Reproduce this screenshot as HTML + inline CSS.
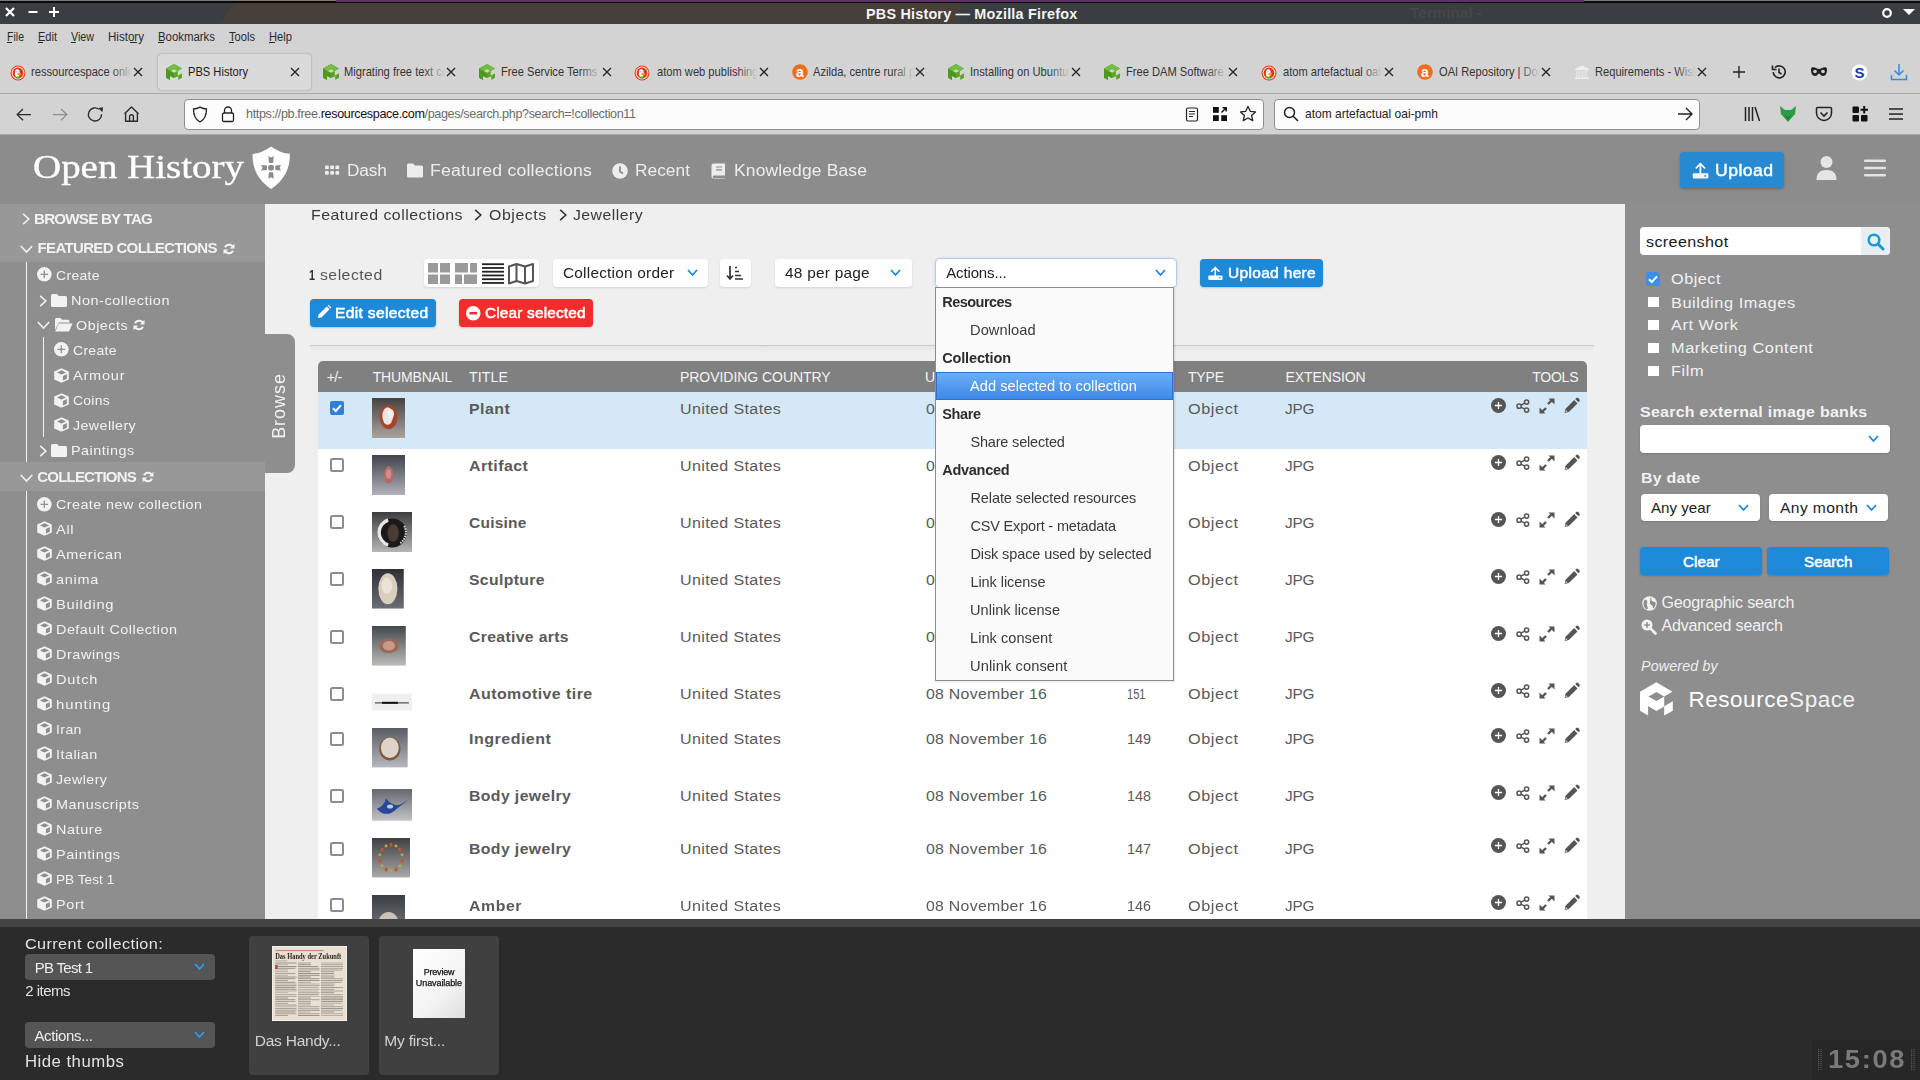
<!DOCTYPE html>
<html><head><meta charset="utf-8">
<style>
*{margin:0;padding:0;box-sizing:border-box}
html,body{width:1920px;height:1080px;overflow:hidden;background:#efefef;font-family:"Liberation Sans",sans-serif}
.a{position:absolute}
.t{position:absolute;white-space:nowrap;line-height:1}
svg{position:absolute;overflow:visible}
</style></head><body>
<div class="a" style="left:0px;top:0px;width:1920px;height:24px;background:#3b3e40;"></div>
<div class="a" style="left:0;top:0;width:1920px;height:24px;background:#463f3a;clip-path:polygon(237px 2px,960px 2px,960px 24px,218px 24px)"></div>
<div class="a" style="left:0px;top:0px;width:1920px;height:1px;background:#797a7c;"></div>
<div class="a" style="left:237px;top:0px;width:99px;height:1px;background:#857a74;"></div>
<div class="a" style="left:0px;top:1px;width:1920px;height:1.5px;background:#0a0a0a;"></div>
<div class="a" style="left:336px;top:0px;width:1248px;height:2.2px;background:#5a3563;"></div>
<div class="t" style="left:866.0px;top:6.9px;font-size:14px;color:#f4f4f4;font-family:'Liberation Sans',sans-serif;font-weight:bold;font-style:normal;letter-spacing:0.200px;transform:scaleX(1.0273);transform-origin:0 0;">PBS History — Mozilla Firefox</div>
<div class="t" style="left:1410.0px;top:5.8px;font-size:14.5px;color:#44484a;font-family:'Liberation Sans',sans-serif;font-weight:bold;font-style:normal;letter-spacing:0.213px;transform:scaleX(1.0274);transform-origin:0 0;">Terminal -</div>
<svg style="left:4px;top:6px;" width="12" height="12" viewBox="0 0 12 12"><path d="M2 2L10 10M10 2L2 10" stroke="#fff" stroke-width="2.2"/></svg>
<svg style="left:27px;top:6px;" width="12" height="12" viewBox="0 0 12 12"><path d="M1.5 6H10.5" stroke="#fff" stroke-width="2"/></svg>
<svg style="left:48px;top:6px;" width="12" height="12" viewBox="0 0 12 12"><path d="M1 6H11M6 1V11" stroke="#fff" stroke-width="2"/></svg>
<svg style="left:1879px;top:5px;" width="16" height="16" viewBox="0 0 16 16"><circle cx="8" cy="8" r="3.8" fill="none" stroke="#fff" stroke-width="2.2"/></svg>
<svg style="left:1902px;top:8px;" width="14" height="10" viewBox="0 0 14 10"><path d="M1 1H13L7 7Z" fill="#fff"/></svg>
<div class="a" style="left:0px;top:24px;width:1920px;height:69px;background:#d3d3d3;"></div>
<div class="t" style="left:7.0px;top:30.8px;font-size:12.5px;color:#2a2a2a;font-family:'Liberation Sans',sans-serif;font-weight:normal;font-style:normal;transform:scaleX(0.8440);transform-origin:0 0;">File</div>
<div class="t" style="left:38.0px;top:30.8px;font-size:12.5px;color:#2a2a2a;font-family:'Liberation Sans',sans-serif;font-weight:normal;font-style:normal;transform:scaleX(0.8821);transform-origin:0 0;">Edit</div>
<div class="t" style="left:71.0px;top:30.8px;font-size:12.5px;color:#2a2a2a;font-family:'Liberation Sans',sans-serif;font-weight:normal;font-style:normal;transform:scaleX(0.8560);transform-origin:0 0;">View</div>
<div class="t" style="left:108.0px;top:30.8px;font-size:12.5px;color:#2a2a2a;font-family:'Liberation Sans',sans-serif;font-weight:normal;font-style:normal;transform:scaleX(0.9256);transform-origin:0 0;">History</div>
<div class="t" style="left:158.0px;top:30.8px;font-size:12.5px;color:#2a2a2a;font-family:'Liberation Sans',sans-serif;font-weight:normal;font-style:normal;transform:scaleX(0.9117);transform-origin:0 0;">Bookmarks</div>
<div class="t" style="left:229.0px;top:30.8px;font-size:12.5px;color:#2a2a2a;font-family:'Liberation Sans',sans-serif;font-weight:normal;font-style:normal;transform:scaleX(0.8910);transform-origin:0 0;">Tools</div>
<div class="t" style="left:269.0px;top:30.8px;font-size:12.5px;color:#2a2a2a;font-family:'Liberation Sans',sans-serif;font-weight:normal;font-style:normal;transform:scaleX(0.8946);transform-origin:0 0;">Help</div>
<div class="a" style="left:7px;top:42px;width:5px;height:1px;background:#2a2a2a;"></div>
<div class="a" style="left:38px;top:42px;width:5px;height:1px;background:#2a2a2a;"></div>
<div class="a" style="left:71px;top:42px;width:5px;height:1px;background:#2a2a2a;"></div>
<div class="a" style="left:130px;top:42px;width:7px;height:1px;background:#2a2a2a;"></div>
<div class="a" style="left:158px;top:42px;width:6px;height:1px;background:#2a2a2a;"></div>
<div class="a" style="left:229px;top:42px;width:5px;height:1px;background:#2a2a2a;"></div>
<div class="a" style="left:269px;top:42px;width:6px;height:1px;background:#2a2a2a;"></div>
<div class="a" style="left:158px;top:54px;width:153px;height:36px;background:#dadada;border-radius:4px;box-shadow:0 0 2px rgba(0,0,0,.35)"></div>
<svg style="left:9.5px;top:64.5px;" width="16" height="16" viewBox="0 0 16 16"><circle cx="8" cy="8" r="7.5" fill="#e2401f"/><circle cx="8" cy="8" r="6.4" fill="#fde8e0"/><circle cx="8" cy="8" r="5.4" fill="#dd3a12"/><ellipse cx="7.3" cy="8.3" rx="2.4" ry="4" fill="#fff"/><circle cx="6.8" cy="6.7" r="0.8" fill="#9ab8e8"/><ellipse cx="9.2" cy="9" rx="1.9" ry="1.2" fill="#f59a1a"/><rect x="6.3" y="11.6" width="3.6" height="1.8" fill="#2cb83a"/></svg>
<div class="a" style="left:31px;top:62px;width:100px;height:20px;overflow:hidden"><div class="t" style="left:0;top:3.6px;font-size:12.8px;color:#333;transform:scaleX(0.87);transform-origin:0 0">ressourcespace online</div></div>
<div class="a" style="left:111px;top:62px;width:21px;height:20px;background:linear-gradient(90deg,rgba(211,211,211,0),#d3d3d3)"></div>
<svg style="left:133px;top:67px;" width="10" height="10" viewBox="0 0 10 10"><path d="M1 1L9 9M9 1L1 9" stroke="#222" stroke-width="1.3"/></svg>
<svg style="left:165.5px;top:64px;" width="16" height="16" viewBox="0 0 16 16"><path d="M8 0L16 4.5L11.8 7V11.8L16 9.3V13.8L12.2 16V12.2L8 14L4 12V16L0 13.8V4.5Z" fill="#5aa526"/><path d="M8 0L16 4.5L8 9.2L0 4.5Z" fill="#74bd42"/><path d="M0 4.5L8 9.2V14L4 12V16L0 13.8Z" fill="#4f9820"/><path d="M8 5.2L10.8 6.9L8 8.6L5.2 6.9Z" fill="#d3d3d3"/></svg>
<div class="a" style="left:188px;top:62px;width:90px;height:20px;overflow:hidden"><div class="t" style="left:0;top:3.6px;font-size:12.8px;color:#1d1d1d;transform:scaleX(0.87);transform-origin:0 0">PBS History</div></div>
<svg style="left:290px;top:67px;" width="10" height="10" viewBox="0 0 10 10"><path d="M1 1L9 9M9 1L1 9" stroke="#222" stroke-width="1.3"/></svg>
<svg style="left:323px;top:64px;" width="16" height="16" viewBox="0 0 16 16"><path d="M8 0L16 4.5L11.8 7V11.8L16 9.3V13.8L12.2 16V12.2L8 14L4 12V16L0 13.8V4.5Z" fill="#5aa526"/><path d="M8 0L16 4.5L8 9.2L0 4.5Z" fill="#74bd42"/><path d="M0 4.5L8 9.2V14L4 12V16L0 13.8Z" fill="#4f9820"/><path d="M8 5.2L10.8 6.9L8 8.6L5.2 6.9Z" fill="#d3d3d3"/></svg>
<div class="a" style="left:344.25px;top:62px;width:99.75px;height:20px;overflow:hidden"><div class="t" style="left:0;top:3.6px;font-size:12.8px;color:#333;transform:scaleX(0.87);transform-origin:0 0">Migrating free text collection</div></div>
<div class="a" style="left:424px;top:62px;width:21px;height:20px;background:linear-gradient(90deg,rgba(211,211,211,0),#d3d3d3)"></div>
<svg style="left:446px;top:67px;" width="10" height="10" viewBox="0 0 10 10"><path d="M1 1L9 9M9 1L1 9" stroke="#222" stroke-width="1.3"/></svg>
<svg style="left:479px;top:64px;" width="16" height="16" viewBox="0 0 16 16"><path d="M8 0L16 4.5L11.8 7V11.8L16 9.3V13.8L12.2 16V12.2L8 14L4 12V16L0 13.8V4.5Z" fill="#5aa526"/><path d="M8 0L16 4.5L8 9.2L0 4.5Z" fill="#74bd42"/><path d="M0 4.5L8 9.2V14L4 12V16L0 13.8Z" fill="#4f9820"/><path d="M8 5.2L10.8 6.9L8 8.6L5.2 6.9Z" fill="#d3d3d3"/></svg>
<div class="a" style="left:500.5px;top:62px;width:99.5px;height:20px;overflow:hidden"><div class="t" style="left:0;top:3.6px;font-size:12.8px;color:#333;transform:scaleX(0.87);transform-origin:0 0">Free Service Terms | ResourceSpace</div></div>
<div class="a" style="left:580px;top:62px;width:21px;height:20px;background:linear-gradient(90deg,rgba(211,211,211,0),#d3d3d3)"></div>
<svg style="left:602px;top:67px;" width="10" height="10" viewBox="0 0 10 10"><path d="M1 1L9 9M9 1L1 9" stroke="#222" stroke-width="1.3"/></svg>
<svg style="left:634px;top:64.5px;" width="16" height="16" viewBox="0 0 16 16"><circle cx="8" cy="8" r="7.5" fill="#e2401f"/><circle cx="8" cy="8" r="6.4" fill="#fde8e0"/><circle cx="8" cy="8" r="5.4" fill="#dd3a12"/><ellipse cx="7.3" cy="8.3" rx="2.4" ry="4" fill="#fff"/><circle cx="6.8" cy="6.7" r="0.8" fill="#9ab8e8"/><ellipse cx="9.2" cy="9" rx="1.9" ry="1.2" fill="#f59a1a"/><rect x="6.3" y="11.6" width="3.6" height="1.8" fill="#2cb83a"/></svg>
<div class="a" style="left:657px;top:62px;width:100px;height:20px;overflow:hidden"><div class="t" style="left:0;top:3.6px;font-size:12.8px;color:#333;transform:scaleX(0.87);transform-origin:0 0">atom web publishing</div></div>
<div class="a" style="left:737px;top:62px;width:21px;height:20px;background:linear-gradient(90deg,rgba(211,211,211,0),#d3d3d3)"></div>
<svg style="left:759px;top:67px;" width="10" height="10" viewBox="0 0 10 10"><path d="M1 1L9 9M9 1L1 9" stroke="#222" stroke-width="1.3"/></svg>
<svg style="left:791.5px;top:64px;" width="16" height="16" viewBox="0 0 16 16"><circle cx="8" cy="8" r="7.8" fill="#f26c1e"/><text x="8" y="12.6" font-size="14" font-family="Liberation Sans" font-weight="bold" fill="#fff" text-anchor="middle">a</text></svg>
<div class="a" style="left:813.25px;top:62px;width:99.75px;height:20px;overflow:hidden"><div class="t" style="left:0;top:3.6px;font-size:12.8px;color:#333;transform:scaleX(0.87);transform-origin:0 0">Azilda, centre rural pour</div></div>
<div class="a" style="left:893px;top:62px;width:21px;height:20px;background:linear-gradient(90deg,rgba(211,211,211,0),#d3d3d3)"></div>
<svg style="left:915px;top:67px;" width="10" height="10" viewBox="0 0 10 10"><path d="M1 1L9 9M9 1L1 9" stroke="#222" stroke-width="1.3"/></svg>
<svg style="left:948px;top:64px;" width="16" height="16" viewBox="0 0 16 16"><path d="M8 0L16 4.5L11.8 7V11.8L16 9.3V13.8L12.2 16V12.2L8 14L4 12V16L0 13.8V4.5Z" fill="#5aa526"/><path d="M8 0L16 4.5L8 9.2L0 4.5Z" fill="#74bd42"/><path d="M0 4.5L8 9.2V14L4 12V16L0 13.8Z" fill="#4f9820"/><path d="M8 5.2L10.8 6.9L8 8.6L5.2 6.9Z" fill="#d3d3d3"/></svg>
<div class="a" style="left:969.5px;top:62px;width:99.5px;height:20px;overflow:hidden"><div class="t" style="left:0;top:3.6px;font-size:12.8px;color:#333;transform:scaleX(0.87);transform-origin:0 0">Installing on Ubuntu</div></div>
<div class="a" style="left:1049px;top:62px;width:21px;height:20px;background:linear-gradient(90deg,rgba(211,211,211,0),#d3d3d3)"></div>
<svg style="left:1071px;top:67px;" width="10" height="10" viewBox="0 0 10 10"><path d="M1 1L9 9M9 1L1 9" stroke="#222" stroke-width="1.3"/></svg>
<svg style="left:1104px;top:64px;" width="16" height="16" viewBox="0 0 16 16"><path d="M8 0L16 4.5L11.8 7V11.8L16 9.3V13.8L12.2 16V12.2L8 14L4 12V16L0 13.8V4.5Z" fill="#5aa526"/><path d="M8 0L16 4.5L8 9.2L0 4.5Z" fill="#74bd42"/><path d="M0 4.5L8 9.2V14L4 12V16L0 13.8Z" fill="#4f9820"/><path d="M8 5.2L10.8 6.9L8 8.6L5.2 6.9Z" fill="#d3d3d3"/></svg>
<div class="a" style="left:1126.25px;top:62px;width:99.75px;height:20px;overflow:hidden"><div class="t" style="left:0;top:3.6px;font-size:12.8px;color:#333;transform:scaleX(0.87);transform-origin:0 0">Free DAM Software</div></div>
<div class="a" style="left:1206px;top:62px;width:21px;height:20px;background:linear-gradient(90deg,rgba(211,211,211,0),#d3d3d3)"></div>
<svg style="left:1228px;top:67px;" width="10" height="10" viewBox="0 0 10 10"><path d="M1 1L9 9M9 1L1 9" stroke="#222" stroke-width="1.3"/></svg>
<svg style="left:1260.5px;top:64.5px;" width="16" height="16" viewBox="0 0 16 16"><circle cx="8" cy="8" r="7.5" fill="#e2401f"/><circle cx="8" cy="8" r="6.4" fill="#fde8e0"/><circle cx="8" cy="8" r="5.4" fill="#dd3a12"/><ellipse cx="7.3" cy="8.3" rx="2.4" ry="4" fill="#fff"/><circle cx="6.8" cy="6.7" r="0.8" fill="#9ab8e8"/><ellipse cx="9.2" cy="9" rx="1.9" ry="1.2" fill="#f59a1a"/><rect x="6.3" y="11.6" width="3.6" height="1.8" fill="#2cb83a"/></svg>
<div class="a" style="left:1282.5px;top:62px;width:99.5px;height:20px;overflow:hidden"><div class="t" style="left:0;top:3.6px;font-size:12.8px;color:#333;transform:scaleX(0.87);transform-origin:0 0">atom artefactual oai-pmh</div></div>
<div class="a" style="left:1362px;top:62px;width:21px;height:20px;background:linear-gradient(90deg,rgba(211,211,211,0),#d3d3d3)"></div>
<svg style="left:1384px;top:67px;" width="10" height="10" viewBox="0 0 10 10"><path d="M1 1L9 9M9 1L1 9" stroke="#222" stroke-width="1.3"/></svg>
<svg style="left:1416.5px;top:64px;" width="16" height="16" viewBox="0 0 16 16"><circle cx="8" cy="8" r="7.8" fill="#f26c1e"/><text x="8" y="12.6" font-size="14" font-family="Liberation Sans" font-weight="bold" fill="#fff" text-anchor="middle">a</text></svg>
<div class="a" style="left:1438.75px;top:62px;width:100.25px;height:20px;overflow:hidden"><div class="t" style="left:0;top:3.6px;font-size:12.8px;color:#333;transform:scaleX(0.87);transform-origin:0 0">OAI Repository | Docs</div></div>
<div class="a" style="left:1519px;top:62px;width:21px;height:20px;background:linear-gradient(90deg,rgba(211,211,211,0),#d3d3d3)"></div>
<svg style="left:1541px;top:67px;" width="10" height="10" viewBox="0 0 10 10"><path d="M1 1L9 9M9 1L1 9" stroke="#222" stroke-width="1.3"/></svg>
<svg style="left:1574px;top:64px;" width="16" height="16" viewBox="0 0 16 16"><path d="M1 5L8 1.5L15 5V6H1Z" fill="#eee"/><rect x="2" y="6.5" width="12" height="7" fill="#e6e6e6"/><path d="M4 7v6M7 7v6M10 7v6M13 7v6" stroke="#cfcfcf" stroke-width="1"/><rect x="1" y="13.5" width="14" height="1.5" fill="#eee"/></svg>
<div class="a" style="left:1595px;top:62px;width:100px;height:20px;overflow:hidden"><div class="t" style="left:0;top:3.6px;font-size:12.8px;color:#333;transform:scaleX(0.87);transform-origin:0 0">Requirements - Wishlist</div></div>
<div class="a" style="left:1675px;top:62px;width:21px;height:20px;background:linear-gradient(90deg,rgba(211,211,211,0),#d3d3d3)"></div>
<svg style="left:1697px;top:67px;" width="10" height="10" viewBox="0 0 10 10"><path d="M1 1L9 9M9 1L1 9" stroke="#222" stroke-width="1.3"/></svg>
<svg style="left:1733px;top:66px;" width="12" height="12" viewBox="0 0 12 12"><path d="M6 0V12M0 6H12" stroke="#222" stroke-width="1.4"/></svg>
<svg style="left:1770px;top:63px;" width="18" height="18" viewBox="0 0 18 18"><path d="M3.2 9A6 6 0 1 0 5 4.6" fill="none" stroke="#222" stroke-width="1.6"/><path d="M2.5 2.5V6.5H6.5" fill="none" stroke="#222" stroke-width="1.6"/><path d="M9 5.5V9.5L11.5 11" fill="none" stroke="#222" stroke-width="1.6"/></svg>
<svg style="left:1810px;top:66px;" width="18" height="12" viewBox="0 0 18 12"><path d="M1 3C1 1 4 1 6 2C7 2.6 8 3 9 3C10 3 11 2.6 12 2C14 1 17 1 17 3C17 7 16 10 13 10C11 10 10 8 9 7.5C8 8 7 10 5 10C2 10 1 7 1 3Z" fill="#222"/><circle cx="5" cy="5.5" r="1.8" fill="#d3d3d3"/><circle cx="13" cy="5.5" r="1.8" fill="#d3d3d3"/></svg>
<svg style="left:1851px;top:64px;" width="17" height="17" viewBox="0 0 17 17"><circle cx="8.5" cy="8.5" r="8" fill="#fff"/><text x="8.5" y="14" font-size="15" font-family="Liberation Sans" font-weight="bold" fill="#1b3fa0" text-anchor="middle">S</text></svg>
<svg style="left:1890px;top:63px;" width="18" height="18" viewBox="0 0 18 18"><path d="M9 1V12M4.5 7.5L9 12L13.5 7.5M1.5 12V16.5H16.5V12" fill="none" stroke="#2f8fe3" stroke-width="1.5"/></svg>
<div class="a" style="left:0px;top:93px;width:1920px;height:42px;background:#d3d3d3;"></div>
<div class="a" style="left:0px;top:93px;width:1920px;height:1px;background:#a9a9a9;"></div>
<div class="a" style="left:0px;top:134px;width:1920px;height:1px;background:#a8a8a8;"></div>
<svg style="left:15px;top:105px;" width="18" height="18" viewBox="0 0 18 18"><path d="M16 9.6H2.5M8 4L2.2 9.6L8 15.2" fill="none" stroke="#2b2b2b" stroke-width="1.3"/></svg>
<svg style="left:51px;top:105px;" width="18" height="18" viewBox="0 0 18 18"><path d="M2 9.6H15.5M10 4L15.8 9.6L10 15.2" fill="none" stroke="#8c8c8c" stroke-width="1.3"/></svg>
<svg style="left:87px;top:105px;" width="18" height="18" viewBox="0 0 18 18"><path d="M14.6 9.3A6.6 6.6 0 1 1 12 4.2" fill="none" stroke="#2b2b2b" stroke-width="1.4"/><path d="M11.2 2.9L16 2.2L15.4 7.2Z" fill="#2b2b2b"/></svg>
<svg style="left:122px;top:105px;" width="18" height="18" viewBox="0 0 18 18"><path d="M2.5 8.7L9.5 2L16.5 8.7M3.6 7.6V16.3H15.4V7.6M7.6 16.3V11.6A1.9 1.9 0 0 1 11.4 11.6V16.3" fill="none" stroke="#2b2b2b" stroke-width="1.4" stroke-linejoin="round"/></svg>
<div class="a" style="left:184px;top:98.5px;width:1080px;height:31px;background:#fcfcfc;border:1px solid #8e8e8e;border-radius:4px"></div>
<svg style="left:192px;top:106px;" width="16" height="17" viewBox="0 0 16 17"><path d="M8 1.2C5.5 2.5 3.5 3 1.5 3C1.5 9 3 13.5 8 16C13 13.5 14.5 9 14.5 3C12.5 3 10.5 2.5 8 1.2Z" fill="none" stroke="#222" stroke-width="1.3"/></svg>
<svg style="left:221px;top:105px;" width="14" height="18" viewBox="0 0 14 18"><rect x="1.5" y="8" width="11" height="8.5" rx="1.5" fill="none" stroke="#222" stroke-width="1.3"/><path d="M3.5 8V5.5A3.5 3.5 0 0 1 10.5 5.5V8" fill="none" stroke="#222" stroke-width="1.3"/></svg>
<div class="t" style="left:246px;top:107.5px;font-size:12.6px;color:#6b6b6b;letter-spacing:-0.36px">https://pb.free.<span style="color:#111">resourcespace.com</span>/pages/search.php?search=!collection11</div>
<svg style="left:1185px;top:107px;" width="14" height="14" viewBox="0 0 14 14"><rect x="1.5" y="1" width="11" height="13" rx="1.5" fill="none" stroke="#222" stroke-width="1.2"/><path d="M4 4.5H10M4 7H10M4 9.5H8" stroke="#222" stroke-width="1.1"/></svg>
<svg style="left:1212.7px;top:107px;" width="14" height="14" viewBox="0 0 14 14"><rect x="0" y="0" width="5.8" height="5.8" fill="#111"/><rect x="0" y="8.2" width="5.8" height="5.8" fill="#111"/><rect x="8.2" y="8.2" width="5.8" height="5.8" fill="#111"/><path d="M8.5 5.5L13.2 0.8M9.5 0.8H13.2V4.5" fill="none" stroke="#111" stroke-width="1.5"/></svg>
<svg style="left:1239px;top:105px;" width="18" height="18" viewBox="0 0 18 18"><path d="M9 1.5L11.3 6.3L16.5 6.9L12.6 10.4L13.7 15.6L9 13L4.3 15.6L5.4 10.4L1.5 6.9L6.7 6.3Z" fill="none" stroke="#222" stroke-width="1.3" stroke-linejoin="round"/></svg>
<div class="a" style="left:1274px;top:98.5px;width:426px;height:31px;background:#fcfcfc;border:1px solid #8e8e8e;border-radius:4px"></div>
<svg style="left:1283px;top:106px;" width="16" height="16" viewBox="0 0 16 16"><circle cx="6.5" cy="6.5" r="5" fill="none" stroke="#222" stroke-width="1.5"/><path d="M10.2 10.2L15 15" stroke="#222" stroke-width="1.6"/></svg>
<div class="t" style="left:1305.0px;top:107.6px;font-size:12.8px;color:#222;font-family:'Liberation Sans',sans-serif;font-weight:normal;font-style:normal;transform:scaleX(0.9394);transform-origin:0 0;">atom artefactual oai-pmh</div>
<svg style="left:1677px;top:107px;" width="16" height="14" viewBox="0 0 16 14"><path d="M1 7H15M9 1L15 7L9 13" fill="none" stroke="#222" stroke-width="1.4"/></svg>
<svg style="left:1744px;top:105px;" width="16" height="18" viewBox="0 0 16 18"><path d="M1.5 2V16M5 2V16M8.5 2V16M11 2L15.5 16" stroke="#222" stroke-width="1.5"/></svg>
<svg style="left:1779px;top:105px;" width="18" height="18" viewBox="0 0 18 18"><path d="M1 1L6 5H12L17 1L16 9L9 17L2 9Z" fill="#2e9d45"/><path d="M5 9L9 12L13 9L9 15Z" fill="#1f7a35"/></svg>
<svg style="left:1815px;top:106px;" width="18" height="16" viewBox="0 0 18 16"><path d="M2.5 1.5H15.5A1 1 0 0 1 16.5 2.5V7A7.5 7.5 0 0 1 1.5 7V2.5A1 1 0 0 1 2.5 1.5Z" fill="none" stroke="#222" stroke-width="1.5"/><path d="M5.5 6.5L9 10L12.5 6.5" fill="none" stroke="#222" stroke-width="1.6"/></svg>
<svg style="left:1852px;top:106px;" width="16" height="16" viewBox="0 0 16 16"><rect x="0.5" y="0.5" width="6.5" height="6.5" rx="1" fill="#111"/><rect x="0.5" y="9" width="6.5" height="6.5" rx="1" fill="#111"/><rect x="9" y="9" width="6.5" height="6.5" rx="1" fill="#111"/><path d="M12.2 0V7.5M8.5 3.7H16" stroke="#111" stroke-width="2"/></svg>
<svg style="left:1888px;top:107px;" width="16" height="14" viewBox="0 0 16 14"><path d="M1 2H15M1 7H15M1 12H15" stroke="#222" stroke-width="1.5"/></svg>
<div style="position:absolute;left:0;top:0;width:1920px;height:1080px;will-change:transform">
<div class="a" style="left:0px;top:135px;width:1920px;height:69px;background:#8c8c8c;"></div>
<div class="t" style="left:33.0px;top:150.2px;font-size:33.5px;color:#fff;font-family:'Liberation Serif',serif;font-weight:normal;font-style:normal;transform:scaleX(1.1629);transform-origin:0 0;top:149.8px;line-height:1;-webkit-text-stroke:0.35px #fff;">Open History</div>
<svg style="left:252px;top:146px;" width="38" height="43" viewBox="0 0 38 43"><path d="M19.1 0.4Q28 7 37.9 7.8Q38.5 30 19.1 43Q-0.3 30 0.6 8Q10 7 19.1 0.4Z" fill="#fff"/><g fill="#8c8c8c"><path d="M16.4 10.1L19.05 11.6L21.7 10.1L21.2 17.1L16.9 17.1Z"/><path d="M16.9 26.3L21.2 26.3L21.7 32.8L19.05 31.3L16.4 32.8Z"/><path d="M9 18.9L15 19.4L15 24L9 24.5L10.5 21.7Z"/><path d="M23.3 19.4L29.1 18.9L27.6 21.7L29.1 24.5L23.3 24Z"/><circle cx="19.05" cy="21.7" r="3"/></g></svg>
<svg style="left:325px;top:164px;" width="15" height="12" viewBox="0 0 15 12"><rect x="0" y="1.5" width="3.8" height="3.8" rx="1" fill="#ededed"/><rect x="0" y="7" width="3.8" height="3.8" rx="1" fill="#ededed"/><rect x="5.2" y="1.5" width="3.8" height="3.8" rx="1" fill="#ededed"/><rect x="5.2" y="7" width="3.8" height="3.8" rx="1" fill="#ededed"/><rect x="10.4" y="1.5" width="3.8" height="3.8" rx="1" fill="#ededed"/><rect x="10.4" y="7" width="3.8" height="3.8" rx="1" fill="#ededed"/></svg>
<div class="t" style="left:347.0px;top:161.7px;font-size:17.3px;color:#ededed;font-family:'Liberation Sans',sans-serif;font-weight:normal;font-style:normal;letter-spacing:-0.129px;">Dash</div>
<svg style="left:407px;top:163px;" width="16" height="15" viewBox="0 0 16 15"><path d="M0 2A1.5 1.5 0 0 1 1.5 0.5H6L8 2.5H14.5A1.5 1.5 0 0 1 16 4V13A1.5 1.5 0 0 1 14.5 14.5H1.5A1.5 1.5 0 0 1 0 13Z" fill="#ededed"/></svg>
<div class="t" style="left:430.0px;top:161.7px;font-size:17.3px;color:#ededed;font-family:'Liberation Sans',sans-serif;font-weight:normal;font-style:normal;letter-spacing:0.191px;transform:scaleX(1.0229);transform-origin:0 0;">Featured collections</div>
<svg style="left:612px;top:163px;" width="16" height="16" viewBox="0 0 16 16"><circle cx="8" cy="8" r="7.8" fill="#ededed"/><path d="M8 3.5V8.5L11 10.5" fill="none" stroke="#8c8c8c" stroke-width="1.8"/></svg>
<div class="t" style="left:635.0px;top:161.7px;font-size:17.3px;color:#ededed;font-family:'Liberation Sans',sans-serif;font-weight:normal;font-style:normal;letter-spacing:0.018px;transform:scaleX(1.0017);transform-origin:0 0;">Recent</div>
<svg style="left:711px;top:163px;" width="15" height="16" viewBox="0 0 15 16"><path d="M2.5 0.5H14V12.5H3A1.2 1.2 0 0 0 3 15H14V15.5H2.5A2 2 0 0 1 0.5 13.5V2.5A2 2 0 0 1 2.5 0.5Z" fill="#ededed"/><path d="M5 4H11M5 6.8H11" stroke="#8c8c8c" stroke-width="1.2"/></svg>
<div class="t" style="left:734.0px;top:161.7px;font-size:17.3px;color:#ededed;font-family:'Liberation Sans',sans-serif;font-weight:normal;font-style:normal;letter-spacing:0.122px;transform:scaleX(1.0121);transform-origin:0 0;">Knowledge Base</div>
<div class="a" style="left:1680px;top:152px;width:104px;height:36px;background:#2789d2;border-radius:4px;box-shadow:0 1px 3px rgba(0,0,0,.25)"></div>
<svg style="left:1691.5px;top:161.5px;" width="17" height="17" viewBox="0 0 17 17"><path d="M8.4 11.5V2M4.2 6L8.4 1.6L12.6 6" fill="none" stroke="#fff" stroke-width="1.7" stroke-linecap="round" stroke-linejoin="round"/><rect x="0.8" y="11.3" width="15.6" height="5.2" rx="1" fill="#f4f4f4"/><circle cx="13.2" cy="13.9" r="0.9" fill="#2789d2"/></svg>
<div class="t" style="left:1715.0px;top:161.5px;font-size:17px;color:#fff;font-family:'Liberation Sans',sans-serif;font-weight:normal;font-style:normal;letter-spacing:0.420px;transform:scaleX(1.0376);transform-origin:0 0;-webkit-text-stroke:0.45px #fff;">Upload</div>
<svg style="left:1816px;top:156px;" width="21" height="24" viewBox="0 0 21 24"><circle cx="10.5" cy="6" r="6" fill="#e4e4e4"/><path d="M0.5 24C0.5 17 4 14 10.5 14C17 14 20.5 17 20.5 24Z" fill="#e4e4e4"/></svg>
<svg style="left:1864px;top:159px;" width="22" height="18" viewBox="0 0 22 18"><path d="M1.2 1.7H20.8M1.2 9H20.8M1.2 16.3H20.8" stroke="#e4e4e4" stroke-width="2.6" stroke-linecap="round"/></svg>
</div>
<div style="position:absolute;left:0;top:0;width:1920px;height:1080px;will-change:transform">
<div class="a" style="left:0px;top:204px;width:265px;height:715px;background:#8e8e8e;"></div>
<div class="a" style="left:0px;top:204px;width:265px;height:58px;background:#989898;"></div>
<div class="a" style="left:0px;top:462px;width:265px;height:29px;background:#989898;"></div>
<svg style="left:22px;top:213px;" width="8" height="12" viewBox="0 0 8 12"><path d="M1.2 0.8L6.8 6L1.2 11.2" fill="none" stroke="#f2f2f2" stroke-width="1.6"/></svg>
<div class="t" style="left:34.0px;top:210.7px;font-size:15.2px;color:#f2f2f2;font-family:'Liberation Sans',sans-serif;font-weight:bold;font-style:normal;letter-spacing:-0.804px;">BROWSE BY TAG</div>
<svg style="left:20px;top:245px;" width="13" height="8" viewBox="0 0 13 8"><path d="M0.8 1L6.5 7L12.2 1" fill="none" stroke="#f2f2f2" stroke-width="1.6"/></svg>
<div class="t" style="left:37.5px;top:240.1px;font-size:15px;color:#f2f2f2;font-family:'Liberation Sans',sans-serif;font-weight:bold;font-style:normal;letter-spacing:-0.643px;">FEATURED COLLECTIONS</div>
<svg style="left:222.5px;top:242.5px;" width="12" height="12" viewBox="0 0 12 12"><path d="M10.3 4.6A4.6 4.6 0 0 0 2 4.2M1.7 7.4A4.6 4.6 0 0 0 10 7.8" fill="none" stroke="#f2f2f2" stroke-width="2"/><path d="M11.5 0.8V5.6H6.8Z" fill="#f2f2f2"/><path d="M0.5 11.2V6.4H5.2Z" fill="#f2f2f2"/></svg>
<div class="a" style="left:26px;top:262px;width:1px;height:200px;background:#f2f2f2;"></div>
<svg style="left:37.2px;top:267.2px;" width="14.6" height="14.6" viewBox="0 0 14.6 14.6"><circle cx="7.3" cy="7.3" r="7.3" fill="#f2f2f2"/><path d="M7.3 3.5V11.1M3.5 7.3H11.1" stroke="#8e8e8e" stroke-width="1.3"/></svg>
<div class="t" style="left:56.0px;top:269.1px;font-size:13.5px;color:#f2f2f2;font-family:'Liberation Sans',sans-serif;font-weight:normal;font-style:normal;letter-spacing:0.303px;transform:scaleX(1.0361);transform-origin:0 0;">Create</div>
<svg style="left:38.7px;top:294.5px;" width="8" height="12" viewBox="0 0 8 12"><path d="M1.2 0.8L6.8 6L1.2 11.2" fill="none" stroke="#f2f2f2" stroke-width="1.6"/></svg>
<svg style="left:51.3px;top:293.5px;" width="16" height="13" viewBox="0 0 16 13"><path d="M0 1.5A1.5 1.5 0 0 1 1.5 0H6L7.8 2H14.5A1.5 1.5 0 0 1 16 3.5V11.5A1.5 1.5 0 0 1 14.5 13H1.5A1.5 1.5 0 0 1 0 11.5Z" fill="#f2f2f2"/></svg>
<div class="t" style="left:71.3px;top:293.6px;font-size:13.5px;color:#f2f2f2;font-family:'Liberation Sans',sans-serif;font-weight:normal;font-style:normal;letter-spacing:0.495px;transform:scaleX(1.0703);transform-origin:0 0;">Non-collection</div>
<svg style="left:37px;top:321px;" width="13" height="8" viewBox="0 0 13 8"><path d="M0.8 1L6.5 7L12.2 1" fill="none" stroke="#f2f2f2" stroke-width="1.6"/></svg>
<svg style="left:54.6px;top:318px;" width="18" height="13.5" viewBox="0 0 18 13.5"><path d="M0 1.5A1.5 1.5 0 0 1 1.5 0H5.5L7.3 1.8H13A1.5 1.5 0 0 1 14.5 3.3V4.5H4L0 12Z" fill="#f2f2f2"/><path d="M3.8 5.5H17.5L14 13.5H0.3Z" fill="#f2f2f2"/></svg>
<div class="t" style="left:76.4px;top:318.9px;font-size:13.5px;color:#f2f2f2;font-family:'Liberation Sans',sans-serif;font-weight:normal;font-style:normal;letter-spacing:0.492px;transform:scaleX(1.0608);transform-origin:0 0;">Objects</div>
<svg style="left:132.8px;top:318.5px;" width="12" height="12" viewBox="0 0 12 12"><path d="M10.3 4.6A4.6 4.6 0 0 0 2 4.2M1.7 7.4A4.6 4.6 0 0 0 10 7.8" fill="none" stroke="#f2f2f2" stroke-width="2"/><path d="M11.5 0.8V5.6H6.8Z" fill="#f2f2f2"/><path d="M0.5 11.2V6.4H5.2Z" fill="#f2f2f2"/></svg>
<div class="a" style="left:43px;top:337px;width:1px;height:100px;background:#f2f2f2;"></div>
<svg style="left:54.1px;top:342.2px;" width="14.6" height="14.6" viewBox="0 0 14.6 14.6"><circle cx="7.3" cy="7.3" r="7.3" fill="#f2f2f2"/><path d="M7.3 3.5V11.1M3.5 7.3H11.1" stroke="#8e8e8e" stroke-width="1.3"/></svg>
<div class="t" style="left:73.3px;top:343.9px;font-size:13.5px;color:#f2f2f2;font-family:'Liberation Sans',sans-serif;font-weight:normal;font-style:normal;letter-spacing:0.293px;transform:scaleX(1.0349);transform-origin:0 0;">Create</div>
<svg style="left:54px;top:367.7px;" width="15" height="15" viewBox="0 0 15 15"><path d="M7.5 0.3L14.8 3.6V11.4L7.5 14.7L0.2 11.4V3.6Z" fill="#f2f2f2"/><path d="M7.5 2.3L12 4.4L7.5 6.5L3 4.4Z" fill="#8e8e8e"/><path d="M8.9 8L12.9 6.1V10.7L8.9 12.6Z" fill="#8e8e8e"/></svg>
<div class="t" style="left:73.3px;top:368.9px;font-size:13.5px;color:#f2f2f2;font-family:'Liberation Sans',sans-serif;font-weight:normal;font-style:normal;letter-spacing:0.730px;transform:scaleX(1.0766);transform-origin:0 0;">Armour</div>
<svg style="left:54px;top:392.5px;" width="15" height="15" viewBox="0 0 15 15"><path d="M7.5 0.3L14.8 3.6V11.4L7.5 14.7L0.2 11.4V3.6Z" fill="#f2f2f2"/><path d="M7.5 2.3L12 4.4L7.5 6.5L3 4.4Z" fill="#8e8e8e"/><path d="M8.9 8L12.9 6.1V10.7L8.9 12.6Z" fill="#8e8e8e"/></svg>
<div class="t" style="left:73.3px;top:393.8px;font-size:13.5px;color:#f2f2f2;font-family:'Liberation Sans',sans-serif;font-weight:normal;font-style:normal;letter-spacing:0.277px;transform:scaleX(1.0312);transform-origin:0 0;">Coins</div>
<svg style="left:54px;top:417.4px;" width="15" height="15" viewBox="0 0 15 15"><path d="M7.5 0.3L14.8 3.6V11.4L7.5 14.7L0.2 11.4V3.6Z" fill="#f2f2f2"/><path d="M7.5 2.3L12 4.4L7.5 6.5L3 4.4Z" fill="#8e8e8e"/><path d="M8.9 8L12.9 6.1V10.7L8.9 12.6Z" fill="#8e8e8e"/></svg>
<div class="t" style="left:73.3px;top:418.6px;font-size:13.5px;color:#f2f2f2;font-family:'Liberation Sans',sans-serif;font-weight:normal;font-style:normal;letter-spacing:0.400px;transform:scaleX(1.0539);transform-origin:0 0;">Jewellery</div>
<svg style="left:38.7px;top:444.5px;" width="8" height="12" viewBox="0 0 8 12"><path d="M1.2 0.8L6.8 6L1.2 11.2" fill="none" stroke="#f2f2f2" stroke-width="1.6"/></svg>
<svg style="left:51.3px;top:443.5px;" width="16" height="13" viewBox="0 0 16 13"><path d="M0 1.5A1.5 1.5 0 0 1 1.5 0H6L7.8 2H14.5A1.5 1.5 0 0 1 16 3.5V11.5A1.5 1.5 0 0 1 14.5 13H1.5A1.5 1.5 0 0 1 0 11.5Z" fill="#f2f2f2"/></svg>
<div class="t" style="left:71.3px;top:443.6px;font-size:13.5px;color:#f2f2f2;font-family:'Liberation Sans',sans-serif;font-weight:normal;font-style:normal;letter-spacing:0.481px;transform:scaleX(1.0651);transform-origin:0 0;">Paintings</div>
<svg style="left:20px;top:474px;" width="13" height="8" viewBox="0 0 13 8"><path d="M0.8 1L6.5 7L12.2 1" fill="none" stroke="#f2f2f2" stroke-width="1.6"/></svg>
<div class="t" style="left:37.3px;top:469.1px;font-size:15px;color:#f2f2f2;font-family:'Liberation Sans',sans-serif;font-weight:bold;font-style:normal;letter-spacing:-0.810px;">COLLECTIONS</div>
<svg style="left:142px;top:471px;" width="12" height="12" viewBox="0 0 12 12"><path d="M10.3 4.6A4.6 4.6 0 0 0 2 4.2M1.7 7.4A4.6 4.6 0 0 0 10 7.8" fill="none" stroke="#f2f2f2" stroke-width="2"/><path d="M11.5 0.8V5.6H6.8Z" fill="#f2f2f2"/><path d="M0.5 11.2V6.4H5.2Z" fill="#f2f2f2"/></svg>
<div class="a" style="left:26px;top:491px;width:1px;height:428px;background:#f2f2f2;"></div>
<svg style="left:37.1px;top:496.5px;" width="14.6" height="14.6" viewBox="0 0 14.6 14.6"><circle cx="7.3" cy="7.3" r="7.3" fill="#f2f2f2"/><path d="M7.3 3.5V11.1M3.5 7.3H11.1" stroke="#8e8e8e" stroke-width="1.3"/></svg>
<div class="t" style="left:56.2px;top:497.6px;font-size:13.5px;color:#f2f2f2;font-family:'Liberation Sans',sans-serif;font-weight:normal;font-style:normal;letter-spacing:0.420px;transform:scaleX(1.0614);transform-origin:0 0;">Create new collection</div>
<svg style="left:37px;top:521.3px;" width="15" height="15" viewBox="0 0 15 15"><path d="M7.5 0.3L14.8 3.6V11.4L7.5 14.7L0.2 11.4V3.6Z" fill="#f2f2f2"/><path d="M7.5 2.3L12 4.4L7.5 6.5L3 4.4Z" fill="#8e8e8e"/><path d="M8.9 8L12.9 6.1V10.7L8.9 12.6Z" fill="#8e8e8e"/></svg>
<div class="t" style="left:56.2px;top:522.5px;font-size:13.5px;color:#f2f2f2;font-family:'Liberation Sans',sans-serif;font-weight:normal;font-style:normal;letter-spacing:0.648px;transform:scaleX(1.0800);transform-origin:0 0;">All</div>
<svg style="left:37px;top:546.3px;" width="15" height="15" viewBox="0 0 15 15"><path d="M7.5 0.3L14.8 3.6V11.4L7.5 14.7L0.2 11.4V3.6Z" fill="#f2f2f2"/><path d="M7.5 2.3L12 4.4L7.5 6.5L3 4.4Z" fill="#8e8e8e"/><path d="M8.9 8L12.9 6.1V10.7L8.9 12.6Z" fill="#8e8e8e"/></svg>
<div class="t" style="left:56.2px;top:547.5px;font-size:13.5px;color:#f2f2f2;font-family:'Liberation Sans',sans-serif;font-weight:normal;font-style:normal;letter-spacing:0.619px;transform:scaleX(1.0709);transform-origin:0 0;">American</div>
<svg style="left:37px;top:571.3px;" width="15" height="15" viewBox="0 0 15 15"><path d="M7.5 0.3L14.8 3.6V11.4L7.5 14.7L0.2 11.4V3.6Z" fill="#f2f2f2"/><path d="M7.5 2.3L12 4.4L7.5 6.5L3 4.4Z" fill="#8e8e8e"/><path d="M8.9 8L12.9 6.1V10.7L8.9 12.6Z" fill="#8e8e8e"/></svg>
<div class="t" style="left:56.2px;top:572.5px;font-size:13.5px;color:#f2f2f2;font-family:'Liberation Sans',sans-serif;font-weight:normal;font-style:normal;letter-spacing:0.675px;transform:scaleX(1.0687);transform-origin:0 0;">anima</div>
<svg style="left:37px;top:596.3px;" width="15" height="15" viewBox="0 0 15 15"><path d="M7.5 0.3L14.8 3.6V11.4L7.5 14.7L0.2 11.4V3.6Z" fill="#f2f2f2"/><path d="M7.5 2.3L12 4.4L7.5 6.5L3 4.4Z" fill="#8e8e8e"/><path d="M8.9 8L12.9 6.1V10.7L8.9 12.6Z" fill="#8e8e8e"/></svg>
<div class="t" style="left:56.2px;top:597.5px;font-size:13.5px;color:#f2f2f2;font-family:'Liberation Sans',sans-serif;font-weight:normal;font-style:normal;letter-spacing:0.675px;transform:scaleX(1.0903);transform-origin:0 0;">Building</div>
<svg style="left:37px;top:621.3px;" width="15" height="15" viewBox="0 0 15 15"><path d="M7.5 0.3L14.8 3.6V11.4L7.5 14.7L0.2 11.4V3.6Z" fill="#f2f2f2"/><path d="M7.5 2.3L12 4.4L7.5 6.5L3 4.4Z" fill="#8e8e8e"/><path d="M8.9 8L12.9 6.1V10.7L8.9 12.6Z" fill="#8e8e8e"/></svg>
<div class="t" style="left:56.2px;top:622.5px;font-size:13.5px;color:#f2f2f2;font-family:'Liberation Sans',sans-serif;font-weight:normal;font-style:normal;letter-spacing:0.446px;transform:scaleX(1.0672);transform-origin:0 0;">Default Collection</div>
<svg style="left:37px;top:646.3px;" width="15" height="15" viewBox="0 0 15 15"><path d="M7.5 0.3L14.8 3.6V11.4L7.5 14.7L0.2 11.4V3.6Z" fill="#f2f2f2"/><path d="M7.5 2.3L12 4.4L7.5 6.5L3 4.4Z" fill="#8e8e8e"/><path d="M8.9 8L12.9 6.1V10.7L8.9 12.6Z" fill="#8e8e8e"/></svg>
<div class="t" style="left:56.2px;top:647.5px;font-size:13.5px;color:#f2f2f2;font-family:'Liberation Sans',sans-serif;font-weight:normal;font-style:normal;letter-spacing:0.555px;transform:scaleX(1.0648);transform-origin:0 0;">Drawings</div>
<svg style="left:37px;top:671.3px;" width="15" height="15" viewBox="0 0 15 15"><path d="M7.5 0.3L14.8 3.6V11.4L7.5 14.7L0.2 11.4V3.6Z" fill="#f2f2f2"/><path d="M7.5 2.3L12 4.4L7.5 6.5L3 4.4Z" fill="#8e8e8e"/><path d="M8.9 8L12.9 6.1V10.7L8.9 12.6Z" fill="#8e8e8e"/></svg>
<div class="t" style="left:56.2px;top:672.5px;font-size:13.5px;color:#f2f2f2;font-family:'Liberation Sans',sans-serif;font-weight:normal;font-style:normal;letter-spacing:0.757px;transform:scaleX(1.0795);transform-origin:0 0;">Dutch</div>
<svg style="left:37px;top:696.3px;" width="15" height="15" viewBox="0 0 15 15"><path d="M7.5 0.3L14.8 3.6V11.4L7.5 14.7L0.2 11.4V3.6Z" fill="#f2f2f2"/><path d="M7.5 2.3L12 4.4L7.5 6.5L3 4.4Z" fill="#8e8e8e"/><path d="M8.9 8L12.9 6.1V10.7L8.9 12.6Z" fill="#8e8e8e"/></svg>
<div class="t" style="left:56.2px;top:697.5px;font-size:13.5px;color:#f2f2f2;font-family:'Liberation Sans',sans-serif;font-weight:normal;font-style:normal;letter-spacing:0.831px;transform:scaleX(1.1021);transform-origin:0 0;">hunting</div>
<svg style="left:37px;top:721.3px;" width="15" height="15" viewBox="0 0 15 15"><path d="M7.5 0.3L14.8 3.6V11.4L7.5 14.7L0.2 11.4V3.6Z" fill="#f2f2f2"/><path d="M7.5 2.3L12 4.4L7.5 6.5L3 4.4Z" fill="#8e8e8e"/><path d="M8.9 8L12.9 6.1V10.7L8.9 12.6Z" fill="#8e8e8e"/></svg>
<div class="t" style="left:56.2px;top:722.5px;font-size:13.5px;color:#f2f2f2;font-family:'Liberation Sans',sans-serif;font-weight:normal;font-style:normal;letter-spacing:0.364px;transform:scaleX(1.0449);transform-origin:0 0;">Iran</div>
<svg style="left:37px;top:746.3px;" width="15" height="15" viewBox="0 0 15 15"><path d="M7.5 0.3L14.8 3.6V11.4L7.5 14.7L0.2 11.4V3.6Z" fill="#f2f2f2"/><path d="M7.5 2.3L12 4.4L7.5 6.5L3 4.4Z" fill="#8e8e8e"/><path d="M8.9 8L12.9 6.1V10.7L8.9 12.6Z" fill="#8e8e8e"/></svg>
<div class="t" style="left:56.2px;top:747.5px;font-size:13.5px;color:#f2f2f2;font-family:'Liberation Sans',sans-serif;font-weight:normal;font-style:normal;letter-spacing:0.437px;transform:scaleX(1.0681);transform-origin:0 0;">Italian</div>
<svg style="left:37px;top:771.3px;" width="15" height="15" viewBox="0 0 15 15"><path d="M7.5 0.3L14.8 3.6V11.4L7.5 14.7L0.2 11.4V3.6Z" fill="#f2f2f2"/><path d="M7.5 2.3L12 4.4L7.5 6.5L3 4.4Z" fill="#8e8e8e"/><path d="M8.9 8L12.9 6.1V10.7L8.9 12.6Z" fill="#8e8e8e"/></svg>
<div class="t" style="left:56.2px;top:772.5px;font-size:13.5px;color:#f2f2f2;font-family:'Liberation Sans',sans-serif;font-weight:normal;font-style:normal;letter-spacing:0.431px;transform:scaleX(1.0536);transform-origin:0 0;">Jewlery</div>
<svg style="left:37px;top:796.3px;" width="15" height="15" viewBox="0 0 15 15"><path d="M7.5 0.3L14.8 3.6V11.4L7.5 14.7L0.2 11.4V3.6Z" fill="#f2f2f2"/><path d="M7.5 2.3L12 4.4L7.5 6.5L3 4.4Z" fill="#8e8e8e"/><path d="M8.9 8L12.9 6.1V10.7L8.9 12.6Z" fill="#8e8e8e"/></svg>
<div class="t" style="left:56.2px;top:797.5px;font-size:13.5px;color:#f2f2f2;font-family:'Liberation Sans',sans-serif;font-weight:normal;font-style:normal;letter-spacing:0.512px;transform:scaleX(1.0660);transform-origin:0 0;">Manuscripts</div>
<svg style="left:37px;top:821.3px;" width="15" height="15" viewBox="0 0 15 15"><path d="M7.5 0.3L14.8 3.6V11.4L7.5 14.7L0.2 11.4V3.6Z" fill="#f2f2f2"/><path d="M7.5 2.3L12 4.4L7.5 6.5L3 4.4Z" fill="#8e8e8e"/><path d="M8.9 8L12.9 6.1V10.7L8.9 12.6Z" fill="#8e8e8e"/></svg>
<div class="t" style="left:56.2px;top:822.5px;font-size:13.5px;color:#f2f2f2;font-family:'Liberation Sans',sans-serif;font-weight:normal;font-style:normal;letter-spacing:0.565px;transform:scaleX(1.0655);transform-origin:0 0;">Nature</div>
<svg style="left:37px;top:846.3px;" width="15" height="15" viewBox="0 0 15 15"><path d="M7.5 0.3L14.8 3.6V11.4L7.5 14.7L0.2 11.4V3.6Z" fill="#f2f2f2"/><path d="M7.5 2.3L12 4.4L7.5 6.5L3 4.4Z" fill="#8e8e8e"/><path d="M8.9 8L12.9 6.1V10.7L8.9 12.6Z" fill="#8e8e8e"/></svg>
<div class="t" style="left:56.2px;top:847.5px;font-size:13.5px;color:#f2f2f2;font-family:'Liberation Sans',sans-serif;font-weight:normal;font-style:normal;letter-spacing:0.534px;transform:scaleX(1.0718);transform-origin:0 0;">Paintings</div>
<svg style="left:37px;top:871.3px;" width="15" height="15" viewBox="0 0 15 15"><path d="M7.5 0.3L14.8 3.6V11.4L7.5 14.7L0.2 11.4V3.6Z" fill="#f2f2f2"/><path d="M7.5 2.3L12 4.4L7.5 6.5L3 4.4Z" fill="#8e8e8e"/><path d="M8.9 8L12.9 6.1V10.7L8.9 12.6Z" fill="#8e8e8e"/></svg>
<div class="t" style="left:56.2px;top:872.5px;font-size:13.5px;color:#f2f2f2;font-family:'Liberation Sans',sans-serif;font-weight:normal;font-style:normal;letter-spacing:0.042px;transform:scaleX(1.0058);transform-origin:0 0;">PB Test 1</div>
<svg style="left:37px;top:896.3px;" width="15" height="15" viewBox="0 0 15 15"><path d="M7.5 0.3L14.8 3.6V11.4L7.5 14.7L0.2 11.4V3.6Z" fill="#f2f2f2"/><path d="M7.5 2.3L12 4.4L7.5 6.5L3 4.4Z" fill="#8e8e8e"/><path d="M8.9 8L12.9 6.1V10.7L8.9 12.6Z" fill="#8e8e8e"/></svg>
<div class="t" style="left:56.2px;top:897.5px;font-size:13.5px;color:#f2f2f2;font-family:'Liberation Sans',sans-serif;font-weight:normal;font-style:normal;letter-spacing:0.592px;transform:scaleX(1.0672);transform-origin:0 0;">Port</div>
</div>
<div style="position:absolute;left:0;top:0;width:1920px;height:1080px;will-change:transform">
<div class="a" style="left:265px;top:204px;width:1360px;height:715px;background:#efefef;"></div>
<div class="t" style="left:311.0px;top:207.4px;font-size:15px;color:#3a3a3a;font-family:'Liberation Sans',sans-serif;font-weight:normal;font-style:normal;letter-spacing:0.454px;transform:scaleX(1.0606);transform-origin:0 0;">Featured collections</div>
<svg style="left:474px;top:209px;" width="8" height="12" viewBox="0 0 8 12"><path d="M1.2 0.8L6.8 6L1.2 11.2" fill="none" stroke="#333" stroke-width="1.6"/></svg>
<div class="t" style="left:489.0px;top:207.4px;font-size:15px;color:#3a3a3a;font-family:'Liberation Sans',sans-serif;font-weight:normal;font-style:normal;letter-spacing:0.527px;transform:scaleX(1.0587);transform-origin:0 0;">Objects</div>
<svg style="left:558.5px;top:209px;" width="8" height="12" viewBox="0 0 8 12"><path d="M1.2 0.8L6.8 6L1.2 11.2" fill="none" stroke="#333" stroke-width="1.6"/></svg>
<div class="t" style="left:573.4px;top:207.4px;font-size:15px;color:#3a3a3a;font-family:'Liberation Sans',sans-serif;font-weight:normal;font-style:normal;letter-spacing:0.441px;transform:scaleX(1.0536);transform-origin:0 0;">Jewellery</div>
<div class="t" style="left:309.2px;top:266.7px;font-size:15px;color:#333;font-family:'Liberation Sans',sans-serif;font-weight:bold;font-style:normal;transform:scaleX(0.72);transform-origin:0 0;">1</div>
<div class="t" style="left:320.0px;top:266.7px;font-size:15px;color:#555;font-family:'Liberation Sans',sans-serif;font-weight:normal;font-style:normal;letter-spacing:0.449px;transform:scaleX(1.0534);transform-origin:0 0;">selected</div>
<div class="a" style="left:424px;top:259px;width:115px;height:28px;background:#fff;border-radius:4px;box-shadow:0 1px 2px rgba(0,0,0,.12);"></div>
<svg style="left:428px;top:263px;" width="22" height="21" viewBox="0 0 22 21"><rect x="0" y="0" width="10" height="9.5" fill="#9a9a9a"/><rect x="12" y="0" width="10" height="9.5" fill="#9a9a9a"/><rect x="0" y="11.5" width="10" height="9.5" fill="#9a9a9a"/><rect x="12" y="11.5" width="10" height="9.5" fill="#9a9a9a"/></svg>
<svg style="left:455px;top:263px;" width="22" height="21" viewBox="0 0 22 21"><rect x="0" y="0" width="13" height="9.5" fill="#9a9a9a"/><rect x="15" y="0" width="7" height="9.5" fill="#9a9a9a"/><rect x="0" y="11.5" width="7" height="9.5" fill="#9a9a9a"/><rect x="9" y="11.5" width="13" height="9.5" fill="#9a9a9a"/></svg>
<svg style="left:482px;top:263px;" width="22" height="21" viewBox="0 0 22 21"><rect x="0" y="0.3" width="22" height="1.8" fill="#222"/><rect x="0" y="4.05" width="22" height="1.8" fill="#222"/><rect x="0" y="7.8" width="22" height="1.8" fill="#222"/><rect x="0" y="11.55" width="22" height="1.8" fill="#222"/><rect x="0" y="15.3" width="22" height="1.8" fill="#222"/><rect x="0" y="19.05" width="22" height="1.8" fill="#222"/></svg>
<svg style="left:508px;top:263px;" width="26" height="21" viewBox="0 0 26 21"><path d="M1 3.5L8.5 1L17 3.5L25 1V18L17 20.5L8.5 18L1 20.5Z" fill="none" stroke="#555" stroke-width="2" stroke-linejoin="round"/><path d="M8.5 1V18M17 3.5V20.5" stroke="#555" stroke-width="2"/></svg>
<div class="a" style="left:553px;top:259px;width:155px;height:28px;background:#fff;border-radius:4px;box-shadow:0 1px 2px rgba(0,0,0,.12);"></div>
<div class="t" style="left:562.5px;top:265.3px;font-size:15px;color:#222;font-family:'Liberation Sans',sans-serif;font-weight:normal;font-style:normal;letter-spacing:0.201px;transform:scaleX(1.0279);transform-origin:0 0;">Collection order</div>
<svg style="left:686.7px;top:268.8px;" width="11" height="7" viewBox="0 0 11 7"><path d="M1 1L5.5 6L10 1" fill="none" stroke="#1e89d8" stroke-width="1.8"/></svg>
<div class="a" style="left:720px;top:259px;width:31px;height:28px;background:#fff;border-radius:4px;box-shadow:0 1px 2px rgba(0,0,0,.12);"></div>
<svg style="left:726px;top:265px;" width="18" height="16" viewBox="0 0 18 16"><path d="M4 1V14M1 10.5L4 14L7 10.5" fill="none" stroke="#333" stroke-width="1.7"/><path d="M9 2.5H11M9 6.5H13M9 10.5H15M9 14H17" stroke="#333" stroke-width="1.6"/></svg>
<div class="a" style="left:775px;top:259px;width:137px;height:28px;background:#fff;border-radius:4px;box-shadow:0 1px 2px rgba(0,0,0,.12);"></div>
<div class="t" style="left:785.0px;top:265.3px;font-size:15px;color:#222;font-family:'Liberation Sans',sans-serif;font-weight:normal;font-style:normal;letter-spacing:0.230px;transform:scaleX(1.0279);transform-origin:0 0;">48 per page</div>
<svg style="left:890px;top:268.8px;" width="11" height="7" viewBox="0 0 11 7"><path d="M1 1L5.5 6L10 1" fill="none" stroke="#1e89d8" stroke-width="1.8"/></svg>
<div class="a" style="left:936px;top:259px;width:240px;height:28px;background:#fff;border-radius:4px;box-shadow:0 1px 2px rgba(0,0,0,.12);box-shadow:0 0 0 1px rgba(120,170,230,.35),0 0 3px 1px rgba(120,170,230,.35);"></div>
<div class="t" style="left:946.2px;top:265.4px;font-size:15px;color:#222;font-family:'Liberation Sans',sans-serif;font-weight:normal;font-style:normal;letter-spacing:-0.132px;">Actions...</div>
<svg style="left:1155px;top:268.8px;" width="11" height="7" viewBox="0 0 11 7"><path d="M1 1L5.5 6L10 1" fill="none" stroke="#1e89d8" stroke-width="1.8"/></svg>
<div class="a" style="left:1200px;top:259px;width:123px;height:28px;background:#1e89d8;border-radius:4px;box-shadow:0 1px 2px rgba(0,0,0,.2)"></div>
<svg style="left:1208px;top:265.5px;" width="15" height="15" viewBox="0 0 15 15"><path d="M7.3 10V1.8M3.6 5.2L7.3 1.4L11 5.2" fill="none" stroke="#fff" stroke-width="1.5" stroke-linecap="round" stroke-linejoin="round"/><rect x="0.3" y="9.6" width="14.2" height="4.4" rx="1" fill="#fff"/><rect x="10.8" y="11.3" width="1.8" height="1" fill="#1e89d8"/></svg>
<div class="t" style="left:1228.4px;top:265.4px;font-size:15px;color:#fff;font-family:'Liberation Sans',sans-serif;font-weight:normal;font-style:normal;letter-spacing:0.299px;transform:scaleX(1.0353);transform-origin:0 0;-webkit-text-stroke:0.5px #fff;">Upload here</div>
<div class="a" style="left:310px;top:299px;width:126px;height:28px;background:#1e89d8;border-radius:4px;box-shadow:0 1px 2px rgba(0,0,0,.2)"></div>
<svg style="left:317px;top:305px;" width="14" height="14" viewBox="0 0 14 14"><path d="M1 13L1.6 9.6L9.8 1.4L12.6 4.2L4.4 12.4Z" fill="#fff"/><path d="M10.6 0.6L11.5 -0.3L14.3 2.5L13.4 3.4Z" fill="#fff"/></svg>
<div class="t" style="left:335.0px;top:305.3px;font-size:15px;color:#fff;font-family:'Liberation Sans',sans-serif;font-weight:normal;font-style:normal;letter-spacing:0.302px;transform:scaleX(1.0406);transform-origin:0 0;-webkit-text-stroke:0.55px #fff;">Edit selected</div>
<div class="a" style="left:459px;top:299px;width:134px;height:28px;background:#f42c2c;border-radius:4px;box-shadow:0 1px 2px rgba(0,0,0,.2)"></div>
<svg style="left:466px;top:305.5px;" width="14.5" height="14.5" viewBox="0 0 14.5 14.5"><circle cx="7.25" cy="7.25" r="7.25" fill="#fff"/><rect x="3.5" y="6" width="7.5" height="2.5" fill="#f42c2c"/></svg>
<div class="t" style="left:484.7px;top:305.3px;font-size:15px;color:#fff;font-family:'Liberation Sans',sans-serif;font-weight:normal;font-style:normal;letter-spacing:0.180px;transform:scaleX(1.0238);transform-origin:0 0;-webkit-text-stroke:0.55px #fff;">Clear selected</div>
<div class="a" style="left:310px;top:345px;width:1284px;height:1px;background:#c9c9c9;"></div>
<div class="a" style="left:310px;top:346px;width:1284px;height:6px;background:linear-gradient(#e4e4e4,#efefef)"></div>
</div>
<div class="a" style="left:318px;top:361px;width:1269px;height:558px;background:#fff;border-radius:5px 5px 0 0;overflow:hidden"></div>
<div class="a" style="left:318px;top:361px;width:1269px;height:31px;background:#808080;border-radius:5px 5px 0 0"></div>
<div class="t" style="left:326.7px;top:370.2px;font-size:14px;color:#f4f4f4;font-family:'Liberation Sans',sans-serif;font-weight:normal;font-style:normal;letter-spacing:-0.564px;">+/-</div>
<div class="t" style="left:372.7px;top:370.2px;font-size:14px;color:#f4f4f4;font-family:'Liberation Sans',sans-serif;font-weight:normal;font-style:normal;letter-spacing:-0.162px;">THUMBNAIL</div>
<div class="t" style="left:469.3px;top:370.2px;font-size:14px;color:#f4f4f4;font-family:'Liberation Sans',sans-serif;font-weight:normal;font-style:normal;letter-spacing:0.111px;transform:scaleX(1.0115);transform-origin:0 0;">TITLE</div>
<div class="t" style="left:680.0px;top:370.2px;font-size:14px;color:#f4f4f4;font-family:'Liberation Sans',sans-serif;font-weight:normal;font-style:normal;letter-spacing:-0.045px;">PROVIDING COUNTRY</div>
<div class="t" style="left:925.0px;top:370.2px;font-size:14px;color:#f4f4f4;font-family:'Liberation Sans',sans-serif;font-weight:normal;font-style:normal;letter-spacing:-0.176px;">UPLOAD DATE</div>
<div class="t" style="left:1127.0px;top:370.2px;font-size:14px;color:#f4f4f4;font-family:'Liberation Sans',sans-serif;font-weight:normal;font-style:normal;">ID</div>
<div class="t" style="left:1188.0px;top:370.2px;font-size:14px;color:#f4f4f4;font-family:'Liberation Sans',sans-serif;font-weight:normal;font-style:normal;letter-spacing:-0.189px;">TYPE</div>
<div class="t" style="left:1285.5px;top:370.2px;font-size:14px;color:#f4f4f4;font-family:'Liberation Sans',sans-serif;font-weight:normal;font-style:normal;letter-spacing:-0.088px;">EXTENSION</div>
<div class="t" style="left:1532.2px;top:370.2px;font-size:14px;color:#f4f4f4;font-family:'Liberation Sans',sans-serif;font-weight:normal;font-style:normal;letter-spacing:-0.226px;">TOOLS</div>
<div class="a" style="left:318px;top:392px;width:1269px;height:56.5px;background:#d5e8f8;"></div>
<svg style="left:330px;top:401px;" width="14" height="14" viewBox="0 0 14 14"><rect x="0" y="0" width="14" height="14" rx="2" fill="#2f7fd9"/><path d="M3 7.2L5.8 10L11 4.2" fill="none" stroke="#fff" stroke-width="2"/></svg>
<svg style="left:371.7px;top:397.7px;overflow:hidden" width="33.3" height="40" viewBox="0 0 33.3 40"><defs><linearGradient id="gplant397" x1="0" y1="0" x2="0" y2="1"><stop offset="0" stop-color="#46423f"/><stop offset="1" stop-color="#aaa49e"/></linearGradient></defs><rect width="33.3" height="40" fill="url(#gplant397)"/><ellipse cx="16.65" cy="19.0" rx="8.991" ry="12.0" fill="#a4452b"/><ellipse cx="15.649999999999999" cy="18.0" rx="5.327999999999999" ry="8.8" fill="#ece4e0"/><ellipse cx="18.65" cy="16.0" rx="3.33" ry="4.8" fill="#f4eeea"/></svg>
<div class="t" style="left:469.3px;top:400.9px;font-size:15.2px;color:#5a5a5a;font-family:'Liberation Sans',sans-serif;font-weight:bold;font-style:normal;letter-spacing:0.452px;transform:scaleX(1.0465);transform-origin:0 0;">Plant</div>
<div class="t" style="left:680.0px;top:400.8px;font-size:15.4px;color:#5a5a5a;font-family:'Liberation Sans',sans-serif;font-weight:normal;font-style:normal;letter-spacing:0.351px;transform:scaleX(1.0436);transform-origin:0 0;">United States</div>
<div class="t" style="left:925.5px;top:400.8px;font-size:15.4px;color:#5a5a5a;font-family:'Liberation Sans',sans-serif;font-weight:normal;font-style:normal;letter-spacing:0.271px;transform:scaleX(1.0300);transform-origin:0 0;">08 November 16</div>
<div class="t" style="left:1127.3px;top:400.8px;font-size:15.4px;color:#5a5a5a;font-family:'Liberation Sans',sans-serif;font-weight:normal;font-style:normal;transform:scaleX(0.9340);transform-origin:0 0;">152</div>
<div class="t" style="left:1188.0px;top:400.8px;font-size:15.4px;color:#5a5a5a;font-family:'Liberation Sans',sans-serif;font-weight:normal;font-style:normal;letter-spacing:0.544px;transform:scaleX(1.0578);transform-origin:0 0;">Object</div>
<div class="t" style="left:1285.0px;top:400.8px;font-size:15.4px;color:#5a5a5a;font-family:'Liberation Sans',sans-serif;font-weight:normal;font-style:normal;letter-spacing:-0.225px;">JPG</div>
<svg style="left:1490.5px;top:398.3px;" width="15" height="15" viewBox="0 0 15 15"><circle cx="7.5" cy="7.5" r="7.5" fill="#555"/><path d="M7.5 3.9V11.1M3.9 7.5H11.1" stroke="#fff" stroke-width="1.3"/></svg>
<svg style="left:1515.5px;top:398.8px;" width="14" height="14" viewBox="0 0 14 14"><circle cx="10.6" cy="3.1" r="2.1" fill="none" stroke="#555" stroke-width="1.5"/><circle cx="3.1" cy="7.2" r="2.1" fill="none" stroke="#555" stroke-width="1.5"/><circle cx="10.6" cy="11.1" r="2.1" fill="none" stroke="#555" stroke-width="1.5"/><path d="M5 6.1L8.7 4.1M5 8.2L8.7 10.1" stroke="#555" stroke-width="1.5"/></svg>
<svg style="left:1538.5px;top:398.3px;" width="16" height="16" viewBox="0 0 16 16"><path d="M9.5 0.5H15.5V6.5Z" fill="#555"/><path d="M9 6L13 2" stroke="#555" stroke-width="2.4"/><path d="M0.5 9.5V15.5H6.5Z" fill="#555"/><path d="M7 10L3 14" stroke="#555" stroke-width="2.4"/></svg>
<svg style="left:1563.6px;top:398.2px;" width="16" height="16" viewBox="0 0 16 16"><path d="M0.6 15L1.5 10.8L10.2 2.1L13.5 5.4L4.8 14.1Z" fill="#555"/><path d="M11.2 1.1L12.2 0.1A1.4 1.4 0 0 1 14.2 0.1L15.4 1.3A1.4 1.4 0 0 1 15.4 3.3L14.4 4.3Z" fill="#555"/><path d="M1.4 14.2L1.9 12L3.6 13.7Z" fill="#e8eef5" opacity=".8"/></svg>
<svg style="left:330px;top:458.3px;" width="14" height="14" viewBox="0 0 14 14"><rect x="1" y="1" width="12" height="12" rx="1.5" fill="#fff" stroke="#8b8a96" stroke-width="2"/></svg>
<svg style="left:371.7px;top:455px;overflow:hidden" width="33.3" height="40" viewBox="0 0 33.3 40"><defs><linearGradient id="gart455" x1="0" y1="0" x2="0" y2="1"><stop offset="0" stop-color="#3f434c"/><stop offset="1" stop-color="#b2b1b7"/></linearGradient></defs><rect width="33.3" height="40" fill="url(#gart455)"/><ellipse cx="16.65" cy="20.0" rx="4.662" ry="8.8" fill="#b86a6a"/><ellipse cx="16.65" cy="19.0" rx="2.6639999999999997" ry="4.8" fill="#cf8f8a"/></svg>
<div class="t" style="left:469.3px;top:457.9px;font-size:15.2px;color:#5a5a5a;font-family:'Liberation Sans',sans-serif;font-weight:bold;font-style:normal;letter-spacing:0.402px;transform:scaleX(1.0503);transform-origin:0 0;">Artifact</div>
<div class="t" style="left:680.0px;top:457.8px;font-size:15.4px;color:#5a5a5a;font-family:'Liberation Sans',sans-serif;font-weight:normal;font-style:normal;letter-spacing:0.351px;transform:scaleX(1.0436);transform-origin:0 0;">United States</div>
<div class="t" style="left:925.5px;top:457.8px;font-size:15.4px;color:#5a5a5a;font-family:'Liberation Sans',sans-serif;font-weight:normal;font-style:normal;letter-spacing:0.271px;transform:scaleX(1.0300);transform-origin:0 0;">08 November 16</div>
<div class="t" style="left:1127.3px;top:457.8px;font-size:15.4px;color:#5a5a5a;font-family:'Liberation Sans',sans-serif;font-weight:normal;font-style:normal;transform:scaleX(0.9340);transform-origin:0 0;">154</div>
<div class="t" style="left:1188.0px;top:457.8px;font-size:15.4px;color:#5a5a5a;font-family:'Liberation Sans',sans-serif;font-weight:normal;font-style:normal;letter-spacing:0.544px;transform:scaleX(1.0578);transform-origin:0 0;">Object</div>
<div class="t" style="left:1285.0px;top:457.8px;font-size:15.4px;color:#5a5a5a;font-family:'Liberation Sans',sans-serif;font-weight:normal;font-style:normal;letter-spacing:-0.225px;">JPG</div>
<svg style="left:1490.5px;top:455.3px;" width="15" height="15" viewBox="0 0 15 15"><circle cx="7.5" cy="7.5" r="7.5" fill="#555"/><path d="M7.5 3.9V11.1M3.9 7.5H11.1" stroke="#fff" stroke-width="1.3"/></svg>
<svg style="left:1515.5px;top:455.8px;" width="14" height="14" viewBox="0 0 14 14"><circle cx="10.6" cy="3.1" r="2.1" fill="none" stroke="#555" stroke-width="1.5"/><circle cx="3.1" cy="7.2" r="2.1" fill="none" stroke="#555" stroke-width="1.5"/><circle cx="10.6" cy="11.1" r="2.1" fill="none" stroke="#555" stroke-width="1.5"/><path d="M5 6.1L8.7 4.1M5 8.2L8.7 10.1" stroke="#555" stroke-width="1.5"/></svg>
<svg style="left:1538.5px;top:455.3px;" width="16" height="16" viewBox="0 0 16 16"><path d="M9.5 0.5H15.5V6.5Z" fill="#555"/><path d="M9 6L13 2" stroke="#555" stroke-width="2.4"/><path d="M0.5 9.5V15.5H6.5Z" fill="#555"/><path d="M7 10L3 14" stroke="#555" stroke-width="2.4"/></svg>
<svg style="left:1563.6px;top:455.2px;" width="16" height="16" viewBox="0 0 16 16"><path d="M0.6 15L1.5 10.8L10.2 2.1L13.5 5.4L4.8 14.1Z" fill="#555"/><path d="M11.2 1.1L12.2 0.1A1.4 1.4 0 0 1 14.2 0.1L15.4 1.3A1.4 1.4 0 0 1 15.4 3.3L14.4 4.3Z" fill="#555"/><path d="M1.4 14.2L1.9 12L3.6 13.7Z" fill="#e8eef5" opacity=".8"/></svg>
<svg style="left:330px;top:515px;" width="14" height="14" viewBox="0 0 14 14"><rect x="1" y="1" width="12" height="12" rx="1.5" fill="#fff" stroke="#8b8a96" stroke-width="2"/></svg>
<svg style="left:371.7px;top:512px;overflow:hidden" width="40.3" height="40" viewBox="0 0 40.3 40"><defs><linearGradient id="gcuisine512" x1="0" y1="0" x2="0" y2="1"><stop offset="0" stop-color="#3d3d3f"/><stop offset="1" stop-color="#b5b5b5"/></linearGradient></defs><rect width="40.3" height="40" fill="url(#gcuisine512)"/><circle cx="20.15" cy="21.0" r="14.508" fill="#1a1a1a"/><path d="M16.119999999999997 8.0A13.299 13.299 0 0 0 16.119999999999997 33.2" fill="none" stroke="#e6e6e6" stroke-width="3.5"/><path d="M32.239999999999995 14.0A13.299 13.299 0 0 1 28.21 31.200000000000003" fill="none" stroke="#ddd" stroke-width="2" stroke-dasharray="1.5 1"/><ellipse cx="21.15" cy="21.0" rx="5.642" ry="8.8" fill="#4a3c34"/></svg>
<div class="t" style="left:469.3px;top:514.9px;font-size:15.2px;color:#5a5a5a;font-family:'Liberation Sans',sans-serif;font-weight:bold;font-style:normal;letter-spacing:0.211px;transform:scaleX(1.0225);transform-origin:0 0;">Cuisine</div>
<div class="t" style="left:680.0px;top:514.8px;font-size:15.4px;color:#5a5a5a;font-family:'Liberation Sans',sans-serif;font-weight:normal;font-style:normal;letter-spacing:0.351px;transform:scaleX(1.0436);transform-origin:0 0;">United States</div>
<div class="t" style="left:925.5px;top:514.8px;font-size:15.4px;color:#5a5a5a;font-family:'Liberation Sans',sans-serif;font-weight:normal;font-style:normal;letter-spacing:0.271px;transform:scaleX(1.0300);transform-origin:0 0;">08 November 16</div>
<div class="t" style="left:1127.3px;top:514.8px;font-size:15.4px;color:#5a5a5a;font-family:'Liberation Sans',sans-serif;font-weight:normal;font-style:normal;transform:scaleX(0.9340);transform-origin:0 0;">153</div>
<div class="t" style="left:1188.0px;top:514.8px;font-size:15.4px;color:#5a5a5a;font-family:'Liberation Sans',sans-serif;font-weight:normal;font-style:normal;letter-spacing:0.544px;transform:scaleX(1.0578);transform-origin:0 0;">Object</div>
<div class="t" style="left:1285.0px;top:514.8px;font-size:15.4px;color:#5a5a5a;font-family:'Liberation Sans',sans-serif;font-weight:normal;font-style:normal;letter-spacing:-0.225px;">JPG</div>
<svg style="left:1490.5px;top:512.3px;" width="15" height="15" viewBox="0 0 15 15"><circle cx="7.5" cy="7.5" r="7.5" fill="#555"/><path d="M7.5 3.9V11.1M3.9 7.5H11.1" stroke="#fff" stroke-width="1.3"/></svg>
<svg style="left:1515.5px;top:512.8px;" width="14" height="14" viewBox="0 0 14 14"><circle cx="10.6" cy="3.1" r="2.1" fill="none" stroke="#555" stroke-width="1.5"/><circle cx="3.1" cy="7.2" r="2.1" fill="none" stroke="#555" stroke-width="1.5"/><circle cx="10.6" cy="11.1" r="2.1" fill="none" stroke="#555" stroke-width="1.5"/><path d="M5 6.1L8.7 4.1M5 8.2L8.7 10.1" stroke="#555" stroke-width="1.5"/></svg>
<svg style="left:1538.5px;top:512.3px;" width="16" height="16" viewBox="0 0 16 16"><path d="M9.5 0.5H15.5V6.5Z" fill="#555"/><path d="M9 6L13 2" stroke="#555" stroke-width="2.4"/><path d="M0.5 9.5V15.5H6.5Z" fill="#555"/><path d="M7 10L3 14" stroke="#555" stroke-width="2.4"/></svg>
<svg style="left:1563.6px;top:512.1999999999999px;" width="16" height="16" viewBox="0 0 16 16"><path d="M0.6 15L1.5 10.8L10.2 2.1L13.5 5.4L4.8 14.1Z" fill="#555"/><path d="M11.2 1.1L12.2 0.1A1.4 1.4 0 0 1 14.2 0.1L15.4 1.3A1.4 1.4 0 0 1 15.4 3.3L14.4 4.3Z" fill="#555"/><path d="M1.4 14.2L1.9 12L3.6 13.7Z" fill="#e8eef5" opacity=".8"/></svg>
<svg style="left:330px;top:572.3px;" width="14" height="14" viewBox="0 0 14 14"><rect x="1" y="1" width="12" height="12" rx="1.5" fill="#fff" stroke="#8b8a96" stroke-width="2"/></svg>
<svg style="left:372px;top:569.2px;overflow:hidden" width="31.75" height="39.55" viewBox="0 0 31.75 39.55"><defs><linearGradient id="gsculp569" x1="0" y1="0" x2="0" y2="1"><stop offset="0" stop-color="#2f3035"/><stop offset="1" stop-color="#6c6e75"/></linearGradient></defs><rect width="31.75" height="39.55" fill="url(#gsculp569)"/><ellipse cx="15.875" cy="19.775" rx="9.525" ry="15.4245" fill="#d9cfbf"/><ellipse cx="14.875" cy="16.775" rx="5.3975" ry="7.91" fill="#ebe3d6"/></svg>
<div class="t" style="left:469.3px;top:571.9px;font-size:15.2px;color:#5a5a5a;font-family:'Liberation Sans',sans-serif;font-weight:bold;font-style:normal;letter-spacing:0.344px;transform:scaleX(1.0378);transform-origin:0 0;">Sculpture</div>
<div class="t" style="left:680.0px;top:571.8px;font-size:15.4px;color:#5a5a5a;font-family:'Liberation Sans',sans-serif;font-weight:normal;font-style:normal;letter-spacing:0.351px;transform:scaleX(1.0436);transform-origin:0 0;">United States</div>
<div class="t" style="left:925.5px;top:571.8px;font-size:15.4px;color:#5a5a5a;font-family:'Liberation Sans',sans-serif;font-weight:normal;font-style:normal;letter-spacing:0.271px;transform:scaleX(1.0300);transform-origin:0 0;">08 November 16</div>
<div class="t" style="left:1127.3px;top:571.8px;font-size:15.4px;color:#5a5a5a;font-family:'Liberation Sans',sans-serif;font-weight:normal;font-style:normal;transform:scaleX(0.9340);transform-origin:0 0;">155</div>
<div class="t" style="left:1188.0px;top:571.8px;font-size:15.4px;color:#5a5a5a;font-family:'Liberation Sans',sans-serif;font-weight:normal;font-style:normal;letter-spacing:0.544px;transform:scaleX(1.0578);transform-origin:0 0;">Object</div>
<div class="t" style="left:1285.0px;top:571.8px;font-size:15.4px;color:#5a5a5a;font-family:'Liberation Sans',sans-serif;font-weight:normal;font-style:normal;letter-spacing:-0.225px;">JPG</div>
<svg style="left:1490.5px;top:569.3px;" width="15" height="15" viewBox="0 0 15 15"><circle cx="7.5" cy="7.5" r="7.5" fill="#555"/><path d="M7.5 3.9V11.1M3.9 7.5H11.1" stroke="#fff" stroke-width="1.3"/></svg>
<svg style="left:1515.5px;top:569.8px;" width="14" height="14" viewBox="0 0 14 14"><circle cx="10.6" cy="3.1" r="2.1" fill="none" stroke="#555" stroke-width="1.5"/><circle cx="3.1" cy="7.2" r="2.1" fill="none" stroke="#555" stroke-width="1.5"/><circle cx="10.6" cy="11.1" r="2.1" fill="none" stroke="#555" stroke-width="1.5"/><path d="M5 6.1L8.7 4.1M5 8.2L8.7 10.1" stroke="#555" stroke-width="1.5"/></svg>
<svg style="left:1538.5px;top:569.3px;" width="16" height="16" viewBox="0 0 16 16"><path d="M9.5 0.5H15.5V6.5Z" fill="#555"/><path d="M9 6L13 2" stroke="#555" stroke-width="2.4"/><path d="M0.5 9.5V15.5H6.5Z" fill="#555"/><path d="M7 10L3 14" stroke="#555" stroke-width="2.4"/></svg>
<svg style="left:1563.6px;top:569.1999999999999px;" width="16" height="16" viewBox="0 0 16 16"><path d="M0.6 15L1.5 10.8L10.2 2.1L13.5 5.4L4.8 14.1Z" fill="#555"/><path d="M11.2 1.1L12.2 0.1A1.4 1.4 0 0 1 14.2 0.1L15.4 1.3A1.4 1.4 0 0 1 15.4 3.3L14.4 4.3Z" fill="#555"/><path d="M1.4 14.2L1.9 12L3.6 13.7Z" fill="#e8eef5" opacity=".8"/></svg>
<svg style="left:330px;top:629.6px;" width="14" height="14" viewBox="0 0 14 14"><rect x="1" y="1" width="12" height="12" rx="1.5" fill="#fff" stroke="#8b8a96" stroke-width="2"/></svg>
<svg style="left:372px;top:626px;overflow:hidden" width="33.8" height="39.6" viewBox="0 0 33.8 39.6"><defs><linearGradient id="gcreat626" x1="0" y1="0" x2="0" y2="1"><stop offset="0" stop-color="#43484d"/><stop offset="1" stop-color="#b9bcb6"/></linearGradient></defs><rect width="33.8" height="39.6" fill="url(#gcreat626)"/><ellipse cx="16.9" cy="19.8" rx="9.801999999999998" ry="7.524" fill="#9a6a58"/><ellipse cx="16.9" cy="19.8" rx="6.084" ry="4.752" fill="#c89a88"/></svg>
<div class="t" style="left:469.3px;top:628.9px;font-size:15.2px;color:#5a5a5a;font-family:'Liberation Sans',sans-serif;font-weight:bold;font-style:normal;letter-spacing:0.314px;transform:scaleX(1.0394);transform-origin:0 0;">Creative arts</div>
<div class="t" style="left:680.0px;top:628.8px;font-size:15.4px;color:#5a5a5a;font-family:'Liberation Sans',sans-serif;font-weight:normal;font-style:normal;letter-spacing:0.351px;transform:scaleX(1.0436);transform-origin:0 0;">United States</div>
<div class="t" style="left:925.5px;top:628.8px;font-size:15.4px;color:#5a5a5a;font-family:'Liberation Sans',sans-serif;font-weight:normal;font-style:normal;letter-spacing:0.271px;transform:scaleX(1.0300);transform-origin:0 0;">08 November 16</div>
<div class="t" style="left:1127.3px;top:628.8px;font-size:15.4px;color:#5a5a5a;font-family:'Liberation Sans',sans-serif;font-weight:normal;font-style:normal;transform:scaleX(0.9340);transform-origin:0 0;">150</div>
<div class="t" style="left:1188.0px;top:628.8px;font-size:15.4px;color:#5a5a5a;font-family:'Liberation Sans',sans-serif;font-weight:normal;font-style:normal;letter-spacing:0.544px;transform:scaleX(1.0578);transform-origin:0 0;">Object</div>
<div class="t" style="left:1285.0px;top:628.8px;font-size:15.4px;color:#5a5a5a;font-family:'Liberation Sans',sans-serif;font-weight:normal;font-style:normal;letter-spacing:-0.225px;">JPG</div>
<svg style="left:1490.5px;top:626.3px;" width="15" height="15" viewBox="0 0 15 15"><circle cx="7.5" cy="7.5" r="7.5" fill="#555"/><path d="M7.5 3.9V11.1M3.9 7.5H11.1" stroke="#fff" stroke-width="1.3"/></svg>
<svg style="left:1515.5px;top:626.8px;" width="14" height="14" viewBox="0 0 14 14"><circle cx="10.6" cy="3.1" r="2.1" fill="none" stroke="#555" stroke-width="1.5"/><circle cx="3.1" cy="7.2" r="2.1" fill="none" stroke="#555" stroke-width="1.5"/><circle cx="10.6" cy="11.1" r="2.1" fill="none" stroke="#555" stroke-width="1.5"/><path d="M5 6.1L8.7 4.1M5 8.2L8.7 10.1" stroke="#555" stroke-width="1.5"/></svg>
<svg style="left:1538.5px;top:626.3px;" width="16" height="16" viewBox="0 0 16 16"><path d="M9.5 0.5H15.5V6.5Z" fill="#555"/><path d="M9 6L13 2" stroke="#555" stroke-width="2.4"/><path d="M0.5 9.5V15.5H6.5Z" fill="#555"/><path d="M7 10L3 14" stroke="#555" stroke-width="2.4"/></svg>
<svg style="left:1563.6px;top:626.1999999999999px;" width="16" height="16" viewBox="0 0 16 16"><path d="M0.6 15L1.5 10.8L10.2 2.1L13.5 5.4L4.8 14.1Z" fill="#555"/><path d="M11.2 1.1L12.2 0.1A1.4 1.4 0 0 1 14.2 0.1L15.4 1.3A1.4 1.4 0 0 1 15.4 3.3L14.4 4.3Z" fill="#555"/><path d="M1.4 14.2L1.9 12L3.6 13.7Z" fill="#e8eef5" opacity=".8"/></svg>
<svg style="left:330px;top:686.5px;" width="14" height="14" viewBox="0 0 14 14"><rect x="1" y="1" width="12" height="12" rx="1.5" fill="#fff" stroke="#8b8a96" stroke-width="2"/></svg>
<svg style="left:372px;top:694.2px;" width="39.9" height="16.6" viewBox="0 0 39.9 16.6"><rect width="39.9" height="16.6" fill="#efefef"/><path d="M3 8.8H36.9" stroke="#555" stroke-width="1.2"/><path d="M10 8.8H25.9" stroke="#111" stroke-width="2"/></svg>
<div class="t" style="left:469.3px;top:685.9px;font-size:15.2px;color:#5a5a5a;font-family:'Liberation Sans',sans-serif;font-weight:bold;font-style:normal;letter-spacing:0.422px;transform:scaleX(1.0504);transform-origin:0 0;">Automotive tire</div>
<div class="t" style="left:680.0px;top:685.8px;font-size:15.4px;color:#5a5a5a;font-family:'Liberation Sans',sans-serif;font-weight:normal;font-style:normal;letter-spacing:0.351px;transform:scaleX(1.0436);transform-origin:0 0;">United States</div>
<div class="t" style="left:925.5px;top:685.8px;font-size:15.4px;color:#5a5a5a;font-family:'Liberation Sans',sans-serif;font-weight:normal;font-style:normal;letter-spacing:0.271px;transform:scaleX(1.0300);transform-origin:0 0;">08 November 16</div>
<div class="t" style="left:1127.3px;top:685.8px;font-size:15.4px;color:#5a5a5a;font-family:'Liberation Sans',sans-serif;font-weight:normal;font-style:normal;transform:scaleX(0.7200);transform-origin:0 0;">151</div>
<div class="t" style="left:1188.0px;top:685.8px;font-size:15.4px;color:#5a5a5a;font-family:'Liberation Sans',sans-serif;font-weight:normal;font-style:normal;letter-spacing:0.544px;transform:scaleX(1.0578);transform-origin:0 0;">Object</div>
<div class="t" style="left:1285.0px;top:685.8px;font-size:15.4px;color:#5a5a5a;font-family:'Liberation Sans',sans-serif;font-weight:normal;font-style:normal;letter-spacing:-0.225px;">JPG</div>
<svg style="left:1490.5px;top:683.3px;" width="15" height="15" viewBox="0 0 15 15"><circle cx="7.5" cy="7.5" r="7.5" fill="#555"/><path d="M7.5 3.9V11.1M3.9 7.5H11.1" stroke="#fff" stroke-width="1.3"/></svg>
<svg style="left:1515.5px;top:683.8px;" width="14" height="14" viewBox="0 0 14 14"><circle cx="10.6" cy="3.1" r="2.1" fill="none" stroke="#555" stroke-width="1.5"/><circle cx="3.1" cy="7.2" r="2.1" fill="none" stroke="#555" stroke-width="1.5"/><circle cx="10.6" cy="11.1" r="2.1" fill="none" stroke="#555" stroke-width="1.5"/><path d="M5 6.1L8.7 4.1M5 8.2L8.7 10.1" stroke="#555" stroke-width="1.5"/></svg>
<svg style="left:1538.5px;top:683.3px;" width="16" height="16" viewBox="0 0 16 16"><path d="M9.5 0.5H15.5V6.5Z" fill="#555"/><path d="M9 6L13 2" stroke="#555" stroke-width="2.4"/><path d="M0.5 9.5V15.5H6.5Z" fill="#555"/><path d="M7 10L3 14" stroke="#555" stroke-width="2.4"/></svg>
<svg style="left:1563.6px;top:683.1999999999999px;" width="16" height="16" viewBox="0 0 16 16"><path d="M0.6 15L1.5 10.8L10.2 2.1L13.5 5.4L4.8 14.1Z" fill="#555"/><path d="M11.2 1.1L12.2 0.1A1.4 1.4 0 0 1 14.2 0.1L15.4 1.3A1.4 1.4 0 0 1 15.4 3.3L14.4 4.3Z" fill="#555"/><path d="M1.4 14.2L1.9 12L3.6 13.7Z" fill="#e8eef5" opacity=".8"/></svg>
<svg style="left:330px;top:731.7px;" width="14" height="14" viewBox="0 0 14 14"><rect x="1" y="1" width="12" height="12" rx="1.5" fill="#fff" stroke="#8b8a96" stroke-width="2"/></svg>
<svg style="left:372px;top:728.3px;overflow:hidden" width="35.7" height="39.4" viewBox="0 0 35.7 39.4"><defs><linearGradient id="gingr728" x1="0" y1="0" x2="0" y2="1"><stop offset="0" stop-color="#595d63"/><stop offset="1" stop-color="#b5b8bc"/></linearGradient></defs><rect width="35.7" height="39.4" fill="url(#gingr728)"/><ellipse cx="17.85" cy="20.7" rx="10.71" ry="11.819999999999999" fill="#7d5a3e"/><ellipse cx="17.85" cy="19.7" rx="8.925" ry="10.244" fill="#ddd3c8"/></svg>
<div class="t" style="left:469.3px;top:730.9px;font-size:15.2px;color:#5a5a5a;font-family:'Liberation Sans',sans-serif;font-weight:bold;font-style:normal;letter-spacing:0.469px;transform:scaleX(1.0545);transform-origin:0 0;">Ingredient</div>
<div class="t" style="left:680.0px;top:730.8px;font-size:15.4px;color:#5a5a5a;font-family:'Liberation Sans',sans-serif;font-weight:normal;font-style:normal;letter-spacing:0.351px;transform:scaleX(1.0436);transform-origin:0 0;">United States</div>
<div class="t" style="left:925.5px;top:730.8px;font-size:15.4px;color:#5a5a5a;font-family:'Liberation Sans',sans-serif;font-weight:normal;font-style:normal;letter-spacing:0.271px;transform:scaleX(1.0300);transform-origin:0 0;">08 November 16</div>
<div class="t" style="left:1127.3px;top:730.8px;font-size:15.4px;color:#5a5a5a;font-family:'Liberation Sans',sans-serif;font-weight:normal;font-style:normal;transform:scaleX(0.9340);transform-origin:0 0;">149</div>
<div class="t" style="left:1188.0px;top:730.8px;font-size:15.4px;color:#5a5a5a;font-family:'Liberation Sans',sans-serif;font-weight:normal;font-style:normal;letter-spacing:0.544px;transform:scaleX(1.0578);transform-origin:0 0;">Object</div>
<div class="t" style="left:1285.0px;top:730.8px;font-size:15.4px;color:#5a5a5a;font-family:'Liberation Sans',sans-serif;font-weight:normal;font-style:normal;letter-spacing:-0.225px;">JPG</div>
<svg style="left:1490.5px;top:728.3px;" width="15" height="15" viewBox="0 0 15 15"><circle cx="7.5" cy="7.5" r="7.5" fill="#555"/><path d="M7.5 3.9V11.1M3.9 7.5H11.1" stroke="#fff" stroke-width="1.3"/></svg>
<svg style="left:1515.5px;top:728.8px;" width="14" height="14" viewBox="0 0 14 14"><circle cx="10.6" cy="3.1" r="2.1" fill="none" stroke="#555" stroke-width="1.5"/><circle cx="3.1" cy="7.2" r="2.1" fill="none" stroke="#555" stroke-width="1.5"/><circle cx="10.6" cy="11.1" r="2.1" fill="none" stroke="#555" stroke-width="1.5"/><path d="M5 6.1L8.7 4.1M5 8.2L8.7 10.1" stroke="#555" stroke-width="1.5"/></svg>
<svg style="left:1538.5px;top:728.3px;" width="16" height="16" viewBox="0 0 16 16"><path d="M9.5 0.5H15.5V6.5Z" fill="#555"/><path d="M9 6L13 2" stroke="#555" stroke-width="2.4"/><path d="M0.5 9.5V15.5H6.5Z" fill="#555"/><path d="M7 10L3 14" stroke="#555" stroke-width="2.4"/></svg>
<svg style="left:1563.6px;top:728.1999999999999px;" width="16" height="16" viewBox="0 0 16 16"><path d="M0.6 15L1.5 10.8L10.2 2.1L13.5 5.4L4.8 14.1Z" fill="#555"/><path d="M11.2 1.1L12.2 0.1A1.4 1.4 0 0 1 14.2 0.1L15.4 1.3A1.4 1.4 0 0 1 15.4 3.3L14.4 4.3Z" fill="#555"/><path d="M1.4 14.2L1.9 12L3.6 13.7Z" fill="#e8eef5" opacity=".8"/></svg>
<svg style="left:330px;top:789px;" width="14" height="14" viewBox="0 0 14 14"><rect x="1" y="1" width="12" height="12" rx="1.5" fill="#fff" stroke="#8b8a96" stroke-width="2"/></svg>
<svg style="left:372px;top:789px;overflow:hidden" width="40" height="31.7" viewBox="0 0 40 31.7"><defs><linearGradient id="gbody1789" x1="0" y1="0" x2="0" y2="1"><stop offset="0" stop-color="#64676c"/><stop offset="1" stop-color="#c1c3c6"/></linearGradient></defs><rect width="40" height="31.7" fill="url(#gbody1789)"/><path d="M4.8 19.654Q14.0 30.115 24.8 19.654L36.0 11.094999999999999L28.0 15.85Q20.0 17.435000000000002 14.0 9.51Q12.0 17.435000000000002 4.8 19.654Z" fill="#27489a"/><ellipse cx="18.0" cy="17.435000000000002" rx="3" ry="2" fill="#c8c8d0"/></svg>
<div class="t" style="left:469.3px;top:787.9px;font-size:15.2px;color:#5a5a5a;font-family:'Liberation Sans',sans-serif;font-weight:bold;font-style:normal;letter-spacing:0.368px;transform:scaleX(1.0414);transform-origin:0 0;">Body jewelry</div>
<div class="t" style="left:680.0px;top:787.8px;font-size:15.4px;color:#5a5a5a;font-family:'Liberation Sans',sans-serif;font-weight:normal;font-style:normal;letter-spacing:0.351px;transform:scaleX(1.0436);transform-origin:0 0;">United States</div>
<div class="t" style="left:925.5px;top:787.8px;font-size:15.4px;color:#5a5a5a;font-family:'Liberation Sans',sans-serif;font-weight:normal;font-style:normal;letter-spacing:0.271px;transform:scaleX(1.0300);transform-origin:0 0;">08 November 16</div>
<div class="t" style="left:1127.3px;top:787.8px;font-size:15.4px;color:#5a5a5a;font-family:'Liberation Sans',sans-serif;font-weight:normal;font-style:normal;transform:scaleX(0.9340);transform-origin:0 0;">148</div>
<div class="t" style="left:1188.0px;top:787.8px;font-size:15.4px;color:#5a5a5a;font-family:'Liberation Sans',sans-serif;font-weight:normal;font-style:normal;letter-spacing:0.544px;transform:scaleX(1.0578);transform-origin:0 0;">Object</div>
<div class="t" style="left:1285.0px;top:787.8px;font-size:15.4px;color:#5a5a5a;font-family:'Liberation Sans',sans-serif;font-weight:normal;font-style:normal;letter-spacing:-0.225px;">JPG</div>
<svg style="left:1490.5px;top:785.3px;" width="15" height="15" viewBox="0 0 15 15"><circle cx="7.5" cy="7.5" r="7.5" fill="#555"/><path d="M7.5 3.9V11.1M3.9 7.5H11.1" stroke="#fff" stroke-width="1.3"/></svg>
<svg style="left:1515.5px;top:785.8px;" width="14" height="14" viewBox="0 0 14 14"><circle cx="10.6" cy="3.1" r="2.1" fill="none" stroke="#555" stroke-width="1.5"/><circle cx="3.1" cy="7.2" r="2.1" fill="none" stroke="#555" stroke-width="1.5"/><circle cx="10.6" cy="11.1" r="2.1" fill="none" stroke="#555" stroke-width="1.5"/><path d="M5 6.1L8.7 4.1M5 8.2L8.7 10.1" stroke="#555" stroke-width="1.5"/></svg>
<svg style="left:1538.5px;top:785.3px;" width="16" height="16" viewBox="0 0 16 16"><path d="M9.5 0.5H15.5V6.5Z" fill="#555"/><path d="M9 6L13 2" stroke="#555" stroke-width="2.4"/><path d="M0.5 9.5V15.5H6.5Z" fill="#555"/><path d="M7 10L3 14" stroke="#555" stroke-width="2.4"/></svg>
<svg style="left:1563.6px;top:785.1999999999999px;" width="16" height="16" viewBox="0 0 16 16"><path d="M0.6 15L1.5 10.8L10.2 2.1L13.5 5.4L4.8 14.1Z" fill="#555"/><path d="M11.2 1.1L12.2 0.1A1.4 1.4 0 0 1 14.2 0.1L15.4 1.3A1.4 1.4 0 0 1 15.4 3.3L14.4 4.3Z" fill="#555"/><path d="M1.4 14.2L1.9 12L3.6 13.7Z" fill="#e8eef5" opacity=".8"/></svg>
<svg style="left:330px;top:841.7px;" width="14" height="14" viewBox="0 0 14 14"><rect x="1" y="1" width="12" height="12" rx="1.5" fill="#fff" stroke="#8b8a96" stroke-width="2"/></svg>
<svg style="left:372px;top:838.3px;overflow:hidden" width="38" height="39.4" viewBox="0 0 38 39.4"><defs><linearGradient id="gbody2838" x1="0" y1="0" x2="0" y2="1"><stop offset="0" stop-color="#3e3f42"/><stop offset="1" stop-color="#a9a9a9"/></linearGradient></defs><rect width="38" height="39.4" fill="url(#gbody2838)"/><ellipse cx="19.00907812450236" cy="32.70199587747972" rx="1.5" ry="1.4" fill="#c9a23a"/><ellipse cx="14.062042052332165" cy="31.418960414721802" rx="1.5" ry="2.2" fill="#c2552e"/><ellipse cx="10.092972395332879" cy="27.814975719958362" rx="1.5" ry="1.4" fill="#c9a23a"/><ellipse cx="7.88794648853982" cy="22.60381376727704" rx="1.5" ry="2.2" fill="#c2552e"/><ellipse cx="7.883671429153736" cy="16.817549237699712" rx="1.5" ry="1.4" fill="#c9a23a"/><ellipse cx="10.080993896013691" cy="11.602156325254082" rx="1.5" ry="2.2" fill="#c2552e"/><ellipse cx="14.044732464193924" cy="7.990547655836684" rx="1.5" ry="1.4" fill="#c9a23a"/><ellipse cx="18.989865624949378" cy="6.698005137649755" rx="1.5" ry="2.2" fill="#c2552e"/><ellipse cx="23.93700590657206" cy="7.980517822516685" rx="1.5" ry="1.4" fill="#c9a23a"/><ellipse cx="27.906368325503912" cy="11.584083074910199" rx="1.5" ry="2.2" fill="#c2552e"/><ellipse cx="30.111817564980978" cy="16.795011991630496" rx="1.5" ry="1.4" fill="#c9a23a"/><ellipse cx="30.116562686434932" cy="22.581276044609165" rx="1.5" ry="2.2" fill="#c2552e"/><ellipse cx="27.919663914868288" cy="27.79690113420925" rx="1.5" ry="1.4" fill="#c9a23a"/><ellipse cx="23.956218762024143" cy="31.408928651668056" rx="1.5" ry="2.2" fill="#c2552e"/></svg>
<div class="t" style="left:469.3px;top:840.9px;font-size:15.2px;color:#5a5a5a;font-family:'Liberation Sans',sans-serif;font-weight:bold;font-style:normal;letter-spacing:0.368px;transform:scaleX(1.0414);transform-origin:0 0;">Body jewelry</div>
<div class="t" style="left:680.0px;top:840.8px;font-size:15.4px;color:#5a5a5a;font-family:'Liberation Sans',sans-serif;font-weight:normal;font-style:normal;letter-spacing:0.351px;transform:scaleX(1.0436);transform-origin:0 0;">United States</div>
<div class="t" style="left:925.5px;top:840.8px;font-size:15.4px;color:#5a5a5a;font-family:'Liberation Sans',sans-serif;font-weight:normal;font-style:normal;letter-spacing:0.271px;transform:scaleX(1.0300);transform-origin:0 0;">08 November 16</div>
<div class="t" style="left:1127.3px;top:840.8px;font-size:15.4px;color:#5a5a5a;font-family:'Liberation Sans',sans-serif;font-weight:normal;font-style:normal;transform:scaleX(0.9340);transform-origin:0 0;">147</div>
<div class="t" style="left:1188.0px;top:840.8px;font-size:15.4px;color:#5a5a5a;font-family:'Liberation Sans',sans-serif;font-weight:normal;font-style:normal;letter-spacing:0.544px;transform:scaleX(1.0578);transform-origin:0 0;">Object</div>
<div class="t" style="left:1285.0px;top:840.8px;font-size:15.4px;color:#5a5a5a;font-family:'Liberation Sans',sans-serif;font-weight:normal;font-style:normal;letter-spacing:-0.225px;">JPG</div>
<svg style="left:1490.5px;top:838.3px;" width="15" height="15" viewBox="0 0 15 15"><circle cx="7.5" cy="7.5" r="7.5" fill="#555"/><path d="M7.5 3.9V11.1M3.9 7.5H11.1" stroke="#fff" stroke-width="1.3"/></svg>
<svg style="left:1515.5px;top:838.8px;" width="14" height="14" viewBox="0 0 14 14"><circle cx="10.6" cy="3.1" r="2.1" fill="none" stroke="#555" stroke-width="1.5"/><circle cx="3.1" cy="7.2" r="2.1" fill="none" stroke="#555" stroke-width="1.5"/><circle cx="10.6" cy="11.1" r="2.1" fill="none" stroke="#555" stroke-width="1.5"/><path d="M5 6.1L8.7 4.1M5 8.2L8.7 10.1" stroke="#555" stroke-width="1.5"/></svg>
<svg style="left:1538.5px;top:838.3px;" width="16" height="16" viewBox="0 0 16 16"><path d="M9.5 0.5H15.5V6.5Z" fill="#555"/><path d="M9 6L13 2" stroke="#555" stroke-width="2.4"/><path d="M0.5 9.5V15.5H6.5Z" fill="#555"/><path d="M7 10L3 14" stroke="#555" stroke-width="2.4"/></svg>
<svg style="left:1563.6px;top:838.1999999999999px;" width="16" height="16" viewBox="0 0 16 16"><path d="M0.6 15L1.5 10.8L10.2 2.1L13.5 5.4L4.8 14.1Z" fill="#555"/><path d="M11.2 1.1L12.2 0.1A1.4 1.4 0 0 1 14.2 0.1L15.4 1.3A1.4 1.4 0 0 1 15.4 3.3L14.4 4.3Z" fill="#555"/><path d="M1.4 14.2L1.9 12L3.6 13.7Z" fill="#e8eef5" opacity=".8"/></svg>
<svg style="left:330px;top:898.3px;" width="14" height="14" viewBox="0 0 14 14"><rect x="1" y="1" width="12" height="12" rx="1.5" fill="#fff" stroke="#8b8a96" stroke-width="2"/></svg>
<svg style="left:372px;top:895px;overflow:hidden" width="33" height="39.4" viewBox="0 0 33 39.4"><defs><linearGradient id="gamber895" x1="0" y1="0" x2="0" y2="1"><stop offset="0" stop-color="#3a3d42"/><stop offset="1" stop-color="#7a7d82"/></linearGradient></defs><rect width="33" height="39.4" fill="url(#gamber895)"/><ellipse cx="16.5" cy="29.7" rx="10.56" ry="12.608" fill="#c9c3b5"/></svg>
<div class="t" style="left:469.3px;top:897.9px;font-size:15.2px;color:#5a5a5a;font-family:'Liberation Sans',sans-serif;font-weight:bold;font-style:normal;letter-spacing:0.543px;transform:scaleX(1.0432);transform-origin:0 0;">Amber</div>
<div class="t" style="left:680.0px;top:897.8px;font-size:15.4px;color:#5a5a5a;font-family:'Liberation Sans',sans-serif;font-weight:normal;font-style:normal;letter-spacing:0.351px;transform:scaleX(1.0436);transform-origin:0 0;">United States</div>
<div class="t" style="left:925.5px;top:897.8px;font-size:15.4px;color:#5a5a5a;font-family:'Liberation Sans',sans-serif;font-weight:normal;font-style:normal;letter-spacing:0.271px;transform:scaleX(1.0300);transform-origin:0 0;">08 November 16</div>
<div class="t" style="left:1127.3px;top:897.8px;font-size:15.4px;color:#5a5a5a;font-family:'Liberation Sans',sans-serif;font-weight:normal;font-style:normal;transform:scaleX(0.9340);transform-origin:0 0;">146</div>
<div class="t" style="left:1188.0px;top:897.8px;font-size:15.4px;color:#5a5a5a;font-family:'Liberation Sans',sans-serif;font-weight:normal;font-style:normal;letter-spacing:0.544px;transform:scaleX(1.0578);transform-origin:0 0;">Object</div>
<div class="t" style="left:1285.0px;top:897.8px;font-size:15.4px;color:#5a5a5a;font-family:'Liberation Sans',sans-serif;font-weight:normal;font-style:normal;letter-spacing:-0.225px;">JPG</div>
<svg style="left:1490.5px;top:895.3px;" width="15" height="15" viewBox="0 0 15 15"><circle cx="7.5" cy="7.5" r="7.5" fill="#555"/><path d="M7.5 3.9V11.1M3.9 7.5H11.1" stroke="#fff" stroke-width="1.3"/></svg>
<svg style="left:1515.5px;top:895.8px;" width="14" height="14" viewBox="0 0 14 14"><circle cx="10.6" cy="3.1" r="2.1" fill="none" stroke="#555" stroke-width="1.5"/><circle cx="3.1" cy="7.2" r="2.1" fill="none" stroke="#555" stroke-width="1.5"/><circle cx="10.6" cy="11.1" r="2.1" fill="none" stroke="#555" stroke-width="1.5"/><path d="M5 6.1L8.7 4.1M5 8.2L8.7 10.1" stroke="#555" stroke-width="1.5"/></svg>
<svg style="left:1538.5px;top:895.3px;" width="16" height="16" viewBox="0 0 16 16"><path d="M9.5 0.5H15.5V6.5Z" fill="#555"/><path d="M9 6L13 2" stroke="#555" stroke-width="2.4"/><path d="M0.5 9.5V15.5H6.5Z" fill="#555"/><path d="M7 10L3 14" stroke="#555" stroke-width="2.4"/></svg>
<svg style="left:1563.6px;top:895.1999999999999px;" width="16" height="16" viewBox="0 0 16 16"><path d="M0.6 15L1.5 10.8L10.2 2.1L13.5 5.4L4.8 14.1Z" fill="#555"/><path d="M11.2 1.1L12.2 0.1A1.4 1.4 0 0 1 14.2 0.1L15.4 1.3A1.4 1.4 0 0 1 15.4 3.3L14.4 4.3Z" fill="#555"/><path d="M1.4 14.2L1.9 12L3.6 13.7Z" fill="#e8eef5" opacity=".8"/></svg>
<div class="a" style="left:1625px;top:204px;width:295px;height:715px;background:#8e8e8e;"></div>
<div class="a" style="left:1640px;top:227px;width:250px;height:28px;background:#fff;border-radius:4px;overflow:hidden"><div class="a" style="left:221px;top:0;width:29px;height:28px;background:#e9eef2"></div></div>
<svg style="left:1866.5px;top:233px;" width="17.5" height="17" viewBox="0 0 17.5 17"><circle cx="7" cy="7" r="5.3" fill="none" stroke="#1c9ad6" stroke-width="2.6"/><path d="M11 11L16 16" stroke="#1c9ad6" stroke-width="3" stroke-linecap="round"/></svg>
<div class="t" style="left:1646.0px;top:233.8px;font-size:15.5px;color:#1a1a1a;font-family:'Liberation Sans',sans-serif;font-weight:normal;font-style:normal;letter-spacing:0.350px;transform:scaleX(1.0399);transform-origin:0 0;">screenshot</div>
<svg style="left:1646px;top:272px;" width="14" height="14" viewBox="0 0 14 14"><rect width="14" height="14" rx="2.5" fill="#3d8ee8"/><path d="M3 7.3L5.8 10L11 4.3" fill="none" stroke="#fff" stroke-width="2"/></svg>
<div class="t" style="left:1671.0px;top:271.1px;font-size:15.4px;color:#f2f2f2;font-family:'Liberation Sans',sans-serif;font-weight:normal;font-style:normal;letter-spacing:0.502px;transform:scaleX(1.0535);transform-origin:0 0;">Object</div>
<div class="a" style="left:1648px;top:296.9px;width:10.5px;height:10.5px;background:#fff;"></div>
<div class="t" style="left:1671.0px;top:294.5px;font-size:15.4px;color:#f2f2f2;font-family:'Liberation Sans',sans-serif;font-weight:normal;font-style:normal;letter-spacing:0.520px;transform:scaleX(1.0625);transform-origin:0 0;">Building Images</div>
<div class="a" style="left:1648px;top:319.7px;width:10.5px;height:10.5px;background:#fff;"></div>
<div class="t" style="left:1671.0px;top:317.3px;font-size:15.4px;color:#f2f2f2;font-family:'Liberation Sans',sans-serif;font-weight:normal;font-style:normal;letter-spacing:0.521px;transform:scaleX(1.0578);transform-origin:0 0;">Art Work</div>
<div class="a" style="left:1648px;top:342.7px;width:10.5px;height:10.5px;background:#fff;"></div>
<div class="t" style="left:1671.0px;top:340.3px;font-size:15.4px;color:#f2f2f2;font-family:'Liberation Sans',sans-serif;font-weight:normal;font-style:normal;letter-spacing:0.504px;transform:scaleX(1.0604);transform-origin:0 0;">Marketing Content</div>
<div class="a" style="left:1648px;top:365.7px;width:10.5px;height:10.5px;background:#fff;"></div>
<div class="t" style="left:1671.0px;top:363.3px;font-size:15.4px;color:#f2f2f2;font-family:'Liberation Sans',sans-serif;font-weight:normal;font-style:normal;letter-spacing:0.586px;transform:scaleX(1.0572);transform-origin:0 0;">Film</div>
<div class="t" style="left:1640.4px;top:403.9px;font-size:15.5px;color:#f2f2f2;font-family:'Liberation Sans',sans-serif;font-weight:bold;font-style:normal;letter-spacing:0.260px;transform:scaleX(1.0307);transform-origin:0 0;">Search external image banks</div>
<div class="a" style="left:1640px;top:425px;width:250px;height:28px;background:#fff;border-radius:4px;box-shadow:0 1px 2px rgba(0,0,0,.15)"></div>
<svg style="left:1867.5px;top:435px;" width="11" height="7" viewBox="0 0 11 7"><path d="M1 1L5.5 6L10 1" fill="none" stroke="#1e89d8" stroke-width="1.8"/></svg>
<div class="t" style="left:1640.7px;top:470.2px;font-size:15.5px;color:#f2f2f2;font-family:'Liberation Sans',sans-serif;font-weight:bold;font-style:normal;letter-spacing:0.254px;transform:scaleX(1.0265);transform-origin:0 0;">By date</div>
<div class="a" style="left:1641px;top:494px;width:119px;height:27px;background:#fff;border-radius:4px;box-shadow:0 1px 2px rgba(0,0,0,.15)"></div>
<div class="t" style="left:1651.0px;top:499.7px;font-size:15px;color:#222;font-family:'Liberation Sans',sans-serif;font-weight:normal;font-style:normal;letter-spacing:0.036px;transform:scaleX(1.0042);transform-origin:0 0;">Any year</div>
<svg style="left:1738px;top:503.5px;" width="11" height="7" viewBox="0 0 11 7"><path d="M1 1L5.5 6L10 1" fill="none" stroke="#1e89d8" stroke-width="1.8"/></svg>
<div class="a" style="left:1769px;top:494px;width:119px;height:27px;background:#fff;border-radius:4px;box-shadow:0 1px 2px rgba(0,0,0,.15)"></div>
<div class="t" style="left:1779.5px;top:499.7px;font-size:15px;color:#222;font-family:'Liberation Sans',sans-serif;font-weight:normal;font-style:normal;letter-spacing:0.382px;transform:scaleX(1.0410);transform-origin:0 0;">Any month</div>
<svg style="left:1866px;top:503.5px;" width="11" height="7" viewBox="0 0 11 7"><path d="M1 1L5.5 6L10 1" fill="none" stroke="#1e89d8" stroke-width="1.8"/></svg>
<div class="a" style="left:1640px;top:547px;width:122px;height:28px;background:#1e89d8;border-radius:4px;box-shadow:0 1px 2px rgba(0,0,0,.2)"></div>
<div class="t" style="left:1682.7px;top:553.6px;font-size:15px;color:#fff;font-family:'Liberation Sans',sans-serif;font-weight:normal;font-style:normal;letter-spacing:0.095px;transform:scaleX(1.0105);transform-origin:0 0;-webkit-text-stroke:0.55px #fff;">Clear</div>
<div class="a" style="left:1767px;top:547px;width:122px;height:28px;background:#1e89d8;border-radius:4px;box-shadow:0 1px 2px rgba(0,0,0,.2)"></div>
<div class="t" style="left:1803.6px;top:553.6px;font-size:15px;color:#fff;font-family:'Liberation Sans',sans-serif;font-weight:normal;font-style:normal;letter-spacing:0.088px;transform:scaleX(1.0091);transform-origin:0 0;-webkit-text-stroke:0.55px #fff;">Search</div>
<svg style="left:1641.5px;top:595.5px;" width="15" height="15" viewBox="0 0 15 15"><circle cx="7.5" cy="7.5" r="7.3" fill="#f2f2f2"/><path d="M3 3.5C5 4 6 5.5 5 7C4 8 5.5 10 6 12.5L4.5 13.5C2.5 12 1.5 10 1.5 8C1.5 6 2 4.5 3 3.5ZM9 1.5C10 3 9 4 10 5C11 6 13 5.5 13.5 6.5C14 9 13 11 11 12.5C10.5 11 11 9.5 9.5 9C8 8.5 7.5 7 8 5.5C8.5 4 8 2.5 9 1.5Z" fill="#8e8e8e"/></svg>
<div class="t" style="left:1661.5px;top:595.1px;font-size:16px;color:#f2f2f2;font-family:'Liberation Sans',sans-serif;font-weight:normal;font-style:normal;letter-spacing:-0.137px;">Geographic search</div>
<svg style="left:1641px;top:619px;" width="15.5" height="15" viewBox="0 0 15.5 15"><circle cx="6" cy="6" r="5.5" fill="#f2f2f2"/><path d="M9.5 9.5L14.5 14.5" stroke="#f2f2f2" stroke-width="2.8" stroke-linecap="round"/><path d="M6 3.2V8.8M3.2 6H8.8" stroke="#8e8e8e" stroke-width="1.6"/></svg>
<div class="t" style="left:1661.5px;top:618.0px;font-size:16px;color:#f2f2f2;font-family:'Liberation Sans',sans-serif;font-weight:normal;font-style:normal;letter-spacing:-0.167px;">Advanced search</div>
<div class="t" style="left:1641.3px;top:658.6px;font-size:14px;color:#f0f0f0;font-family:'Liberation Sans',sans-serif;font-weight:normal;font-style:italic;letter-spacing:0.155px;transform:scaleX(1.0185);transform-origin:0 0;">Powered by</div>
<svg style="left:1640px;top:682px;" width="34" height="34" viewBox="0 0 34 34"><path d="M16.4 0.3L32.4 9.8L24.2 14.5V24.6L16.4 28.9L8.1 24V33.4L0 28.7V9.8Z" fill="#fff"/><path d="M24.2 24.3L32.8 19.3V28.7L24.2 33.5Z" fill="#fff"/><path d="M16.4 10L24.2 14.5L16.4 19L8.5 14.5Z" fill="#8e8e8e"/></svg>
<div class="t" style="left:1688.4px;top:689px;font-size:22.5px;color:#fff;letter-spacing:0.55px">Resource<span style="color:#f2f2f2">Space</span></div>
<div style="position:absolute;left:0;top:0;width:1920px;height:1080px;will-change:transform">
<div class="a" style="left:0px;top:919px;width:1920px;height:8px;background:#444;"></div>
<div class="a" style="left:0px;top:927px;width:1920px;height:153px;background:#2b2b2b;"></div>
<div class="t" style="left:25.2px;top:936.1px;font-size:15.5px;color:#e2e2e2;font-family:'Liberation Sans',sans-serif;font-weight:normal;font-style:normal;letter-spacing:0.355px;transform:scaleX(1.0488);transform-origin:0 0;">Current collection:</div>
<div class="a" style="left:25px;top:954px;width:190px;height:26px;background:#555;border-radius:4px"></div>
<div class="t" style="left:34.7px;top:960.0px;font-size:15px;color:#eee;font-family:'Liberation Sans',sans-serif;font-weight:normal;font-style:normal;letter-spacing:-0.703px;">PB Test 1</div>
<svg style="left:193.8px;top:963px;" width="11" height="7" viewBox="0 0 11 7"><path d="M1 1L5.5 6L10 1" fill="none" stroke="#2b9cf2" stroke-width="1.8"/></svg>
<div class="t" style="left:25.2px;top:983.1px;font-size:15px;color:#e2e2e2;font-family:'Liberation Sans',sans-serif;font-weight:normal;font-style:normal;letter-spacing:-0.508px;">2 items</div>
<div class="a" style="left:25px;top:1022px;width:190px;height:26px;background:#555;border-radius:4px"></div>
<div class="t" style="left:34.4px;top:1028.0px;font-size:15px;color:#eee;font-family:'Liberation Sans',sans-serif;font-weight:normal;font-style:normal;letter-spacing:-0.344px;">Actions...</div>
<svg style="left:193.8px;top:1031px;" width="11" height="7" viewBox="0 0 11 7"><path d="M1 1L5.5 6L10 1" fill="none" stroke="#2b9cf2" stroke-width="1.8"/></svg>
<div class="t" style="left:25.2px;top:1053.8px;font-size:16px;color:#e2e2e2;font-family:'Liberation Sans',sans-serif;font-weight:normal;font-style:normal;letter-spacing:0.449px;transform:scaleX(1.0477);transform-origin:0 0;">Hide thumbs</div>
<div class="a" style="left:249px;top:936px;width:120px;height:139px;background:#404040;border-radius:4px"></div>
<div class="a" style="left:379px;top:936px;width:120px;height:139px;background:#404040;border-radius:4px"></div>
<svg style="left:272px;top:946px;" width="75" height="75" viewBox="0 0 75 75"><rect width="75" height="75" fill="#f2eee8"/><rect x="1" y="1" width="73" height="73" fill="#e9e0d3"/><rect x="3.5" y="4" width="48" height="1.1" fill="#b86060" opacity=".7"/><text x="3.2" y="13" font-size="8.3" font-family="Liberation Serif" font-weight="bold" fill="#2a2520" textLength="66" lengthAdjust="spacingAndGlyphs">Das Handy der Zukunft</text><rect x="3.2" y="14.5" width="12" height="0.8" fill="#777" opacity=".6"/><rect x="3.2" y="16.5" width="21.3" height="1" fill="#8d867d" opacity="0.85"/><rect x="3.2" y="18.2" width="12.8" height="1" fill="#8d867d" opacity="0.55"/><rect x="3.2" y="20.0" width="21.3" height="1" fill="#8d867d" opacity="0.85"/><rect x="3.2" y="21.8" width="20.2" height="1" fill="#8d867d" opacity="0.85"/><rect x="3.2" y="23.5" width="12.8" height="1" fill="#8d867d" opacity="0.55"/><rect x="3.2" y="25.2" width="12.8" height="1" fill="#8d867d" opacity="0.55"/><rect x="3.2" y="27.0" width="20.2" height="1" fill="#8d867d" opacity="0.7"/><rect x="3.2" y="28.8" width="12.8" height="1" fill="#8d867d" opacity="0.55"/><rect x="3.2" y="30.5" width="21.3" height="1" fill="#8d867d" opacity="0.85"/><rect x="3.2" y="32.2" width="20.2" height="1" fill="#8d867d" opacity="0.85"/><rect x="3.2" y="34.0" width="12.8" height="1" fill="#8d867d" opacity="0.7"/><rect x="3.2" y="35.8" width="20.2" height="1" fill="#8d867d" opacity="0.85"/><rect x="3.2" y="37.5" width="21.3" height="1" fill="#8d867d" opacity="0.55"/><rect x="3.2" y="39.2" width="21.3" height="1" fill="#8d867d" opacity="0.85"/><rect x="3.2" y="41.0" width="20.2" height="1" fill="#8d867d" opacity="0.85"/><rect x="3.2" y="42.8" width="21.3" height="1" fill="#8d867d" opacity="0.85"/><rect x="3.2" y="44.5" width="21.3" height="1" fill="#8d867d" opacity="0.55"/><rect x="3.2" y="46.2" width="12.8" height="1" fill="#8d867d" opacity="0.55"/><rect x="3.2" y="48.0" width="21.3" height="1" fill="#8d867d" opacity="0.55"/><rect x="3.2" y="49.8" width="21.3" height="1" fill="#8d867d" opacity="0.7"/><rect x="3.2" y="51.5" width="12.8" height="1" fill="#8d867d" opacity="0.85"/><rect x="3.2" y="53.2" width="20.2" height="1" fill="#8d867d" opacity="0.85"/><rect x="3.2" y="55.0" width="20.2" height="1" fill="#8d867d" opacity="0.7"/><rect x="3.2" y="56.8" width="12.8" height="1" fill="#8d867d" opacity="0.7"/><rect x="3.2" y="58.5" width="21.3" height="1" fill="#8d867d" opacity="0.7"/><rect x="3.2" y="60.2" width="21.3" height="1" fill="#8d867d" opacity="0.55"/><rect x="3.2" y="62.0" width="21.3" height="1" fill="#8d867d" opacity="0.7"/><rect x="3.2" y="63.8" width="21.3" height="1" fill="#8d867d" opacity="0.7"/><rect x="3.2" y="65.5" width="20.2" height="1" fill="#8d867d" opacity="0.85"/><rect x="3.2" y="67.2" width="21.3" height="1" fill="#8d867d" opacity="0.7"/><rect x="3.2" y="69.0" width="12.8" height="1" fill="#8d867d" opacity="0.7"/><rect x="26" y="16.5" width="12.9" height="1" fill="#8d867d" opacity="0.7"/><rect x="26" y="18.2" width="12.9" height="1" fill="#8d867d" opacity="0.85"/><rect x="26" y="20.0" width="20.4" height="1" fill="#8d867d" opacity="0.85"/><rect x="26" y="21.8" width="21.5" height="1" fill="#8d867d" opacity="0.7"/><rect x="26" y="23.5" width="21.5" height="1" fill="#8d867d" opacity="0.7"/><rect x="26" y="25.2" width="12.9" height="1" fill="#8d867d" opacity="0.85"/><rect x="26" y="27.0" width="21.5" height="1" fill="#8d867d" opacity="0.85"/><rect x="26" y="28.8" width="21.5" height="1" fill="#8d867d" opacity="0.85"/><rect x="26" y="30.5" width="12.9" height="1" fill="#8d867d" opacity="0.85"/><rect x="26" y="32.2" width="21.5" height="1" fill="#8d867d" opacity="0.85"/><rect x="26" y="34.0" width="21.5" height="1" fill="#8d867d" opacity="0.85"/><rect x="26" y="35.8" width="12.9" height="1" fill="#8d867d" opacity="0.7"/><rect x="26" y="37.5" width="21.5" height="1" fill="#8d867d" opacity="0.55"/><rect x="26" y="39.2" width="21.5" height="1" fill="#8d867d" opacity="0.7"/><rect x="26" y="41.0" width="20.4" height="1" fill="#8d867d" opacity="0.55"/><rect x="26" y="42.8" width="21.5" height="1" fill="#8d867d" opacity="0.55"/><rect x="26" y="44.5" width="20.4" height="1" fill="#8d867d" opacity="0.55"/><rect x="26" y="46.2" width="21.5" height="1" fill="#8d867d" opacity="0.7"/><rect x="26" y="48.0" width="20.4" height="1" fill="#8d867d" opacity="0.7"/><rect x="26" y="49.8" width="21.5" height="1" fill="#8d867d" opacity="0.55"/><rect x="26" y="51.5" width="12.9" height="1" fill="#8d867d" opacity="0.85"/><rect x="26" y="53.2" width="21.5" height="1" fill="#8d867d" opacity="0.7"/><rect x="26" y="55.0" width="12.9" height="1" fill="#8d867d" opacity="0.7"/><rect x="26" y="56.8" width="12.9" height="1" fill="#8d867d" opacity="0.7"/><rect x="26" y="58.5" width="12.9" height="1" fill="#8d867d" opacity="0.55"/><rect x="26" y="60.2" width="21.5" height="1" fill="#8d867d" opacity="0.7"/><rect x="26" y="62.0" width="21.5" height="1" fill="#8d867d" opacity="0.55"/><rect x="26" y="63.8" width="21.5" height="1" fill="#8d867d" opacity="0.85"/><rect x="26" y="65.5" width="12.9" height="1" fill="#8d867d" opacity="0.55"/><rect x="26" y="67.2" width="21.5" height="1" fill="#8d867d" opacity="0.7"/><rect x="26" y="69.0" width="21.5" height="1" fill="#8d867d" opacity="0.85"/><rect x="49" y="16.5" width="22.0" height="1" fill="#8d867d" opacity="0.55"/><rect x="49" y="18.2" width="22.0" height="1" fill="#8d867d" opacity="0.7"/><rect x="49" y="20.0" width="22.0" height="1" fill="#8d867d" opacity="0.7"/><rect x="49" y="21.8" width="22.0" height="1" fill="#8d867d" opacity="0.7"/><rect x="49" y="23.5" width="20.9" height="1" fill="#8d867d" opacity="0.7"/><rect x="49" y="25.2" width="13.2" height="1" fill="#8d867d" opacity="0.7"/><rect x="49" y="27.0" width="13.2" height="1" fill="#8d867d" opacity="0.85"/><rect x="49" y="28.8" width="13.2" height="1" fill="#8d867d" opacity="0.55"/><rect x="49" y="30.5" width="13.2" height="1" fill="#8d867d" opacity="0.85"/><rect x="49" y="32.2" width="22.0" height="1" fill="#8d867d" opacity="0.7"/><rect x="49" y="34.0" width="22.0" height="1" fill="#8d867d" opacity="0.7"/><rect x="49" y="35.8" width="20.9" height="1" fill="#8d867d" opacity="0.7"/><rect x="49" y="37.5" width="13.2" height="1" fill="#8d867d" opacity="0.7"/><rect x="49" y="39.2" width="13.2" height="1" fill="#8d867d" opacity="0.7"/><rect x="49" y="41.0" width="22.0" height="1" fill="#8d867d" opacity="0.7"/><rect x="49" y="42.8" width="13.2" height="1" fill="#8d867d" opacity="0.7"/><rect x="49" y="44.5" width="22.0" height="1" fill="#8d867d" opacity="0.7"/><rect x="49" y="46.2" width="13.2" height="1" fill="#8d867d" opacity="0.85"/><rect x="49" y="48.0" width="22.0" height="1" fill="#8d867d" opacity="0.55"/><rect x="49" y="49.8" width="22.0" height="1" fill="#8d867d" opacity="0.7"/><rect x="49" y="51.5" width="22.0" height="1" fill="#8d867d" opacity="0.85"/><rect x="49" y="53.2" width="22.0" height="1" fill="#8d867d" opacity="0.85"/><rect x="49" y="55.0" width="22.0" height="1" fill="#8d867d" opacity="0.85"/><rect x="49" y="56.8" width="20.9" height="1" fill="#8d867d" opacity="0.55"/><rect x="49" y="58.5" width="13.2" height="1" fill="#8d867d" opacity="0.55"/><rect x="49" y="60.2" width="22.0" height="1" fill="#8d867d" opacity="0.7"/><rect x="49" y="62.0" width="22.0" height="1" fill="#8d867d" opacity="0.85"/><rect x="49" y="63.8" width="20.9" height="1" fill="#8d867d" opacity="0.7"/><rect x="49" y="65.5" width="13.2" height="1" fill="#8d867d" opacity="0.85"/><rect x="49" y="67.2" width="22.0" height="1" fill="#8d867d" opacity="0.55"/><rect x="49" y="69.0" width="22.0" height="1" fill="#8d867d" opacity="0.55"/><rect x="3.2" y="19" width="2.4" height="4" fill="#b04040"/></svg>
<div class="a" style="left:413px;top:949px;width:52.3px;height:68.8px;background:linear-gradient(135deg,#fff 0%,#f4f4f4 60%,#dedede 100%)"></div>
<div class="t" style="left:423.7px;top:967.8px;font-size:9px;color:#111;font-family:'Liberation Sans',sans-serif;font-weight:normal;font-style:normal;letter-spacing:-0.202px;-webkit-text-stroke:0.25px #111;">Preview</div>
<div class="t" style="left:415.8px;top:978.6px;font-size:9px;color:#111;font-family:'Liberation Sans',sans-serif;font-weight:normal;font-style:normal;letter-spacing:-0.083px;-webkit-text-stroke:0.25px #111;">Unavailable</div>
<div class="t" style="left:254.7px;top:1032.5px;font-size:15.5px;color:#d2d2d2;font-family:'Liberation Sans',sans-serif;font-weight:normal;font-style:normal;letter-spacing:-0.222px;">Das Handy...</div>
<div class="t" style="left:384.3px;top:1032.5px;font-size:15.5px;color:#d2d2d2;font-family:'Liberation Sans',sans-serif;font-weight:normal;font-style:normal;letter-spacing:-0.185px;">My first...</div>
<div class="a" style="left:1812px;top:1040px;width:108px;height:40px;background:#272727;"></div>
<div class="t" style="left:1828.2px;top:1046.5px;font-size:25px;color:#7a7a7a;font-family:'Liberation Sans',sans-serif;font-weight:bold;font-style:normal;letter-spacing:1.545px;transform:scaleX(1.0888);transform-origin:0 0;">15:08</div>
<svg style="left:1817.5px;top:1049px;" width="4" height="21" viewBox="0 0 4 21"><rect x="0" y="0" width="1.2" height="1.2" fill="#555"/><rect x="0" y="2" width="1.2" height="1.2" fill="#555"/><rect x="0" y="4" width="1.2" height="1.2" fill="#555"/><rect x="0" y="6" width="1.2" height="1.2" fill="#555"/><rect x="0" y="8" width="1.2" height="1.2" fill="#555"/><rect x="0" y="10" width="1.2" height="1.2" fill="#555"/><rect x="0" y="12" width="1.2" height="1.2" fill="#555"/><rect x="0" y="14" width="1.2" height="1.2" fill="#555"/><rect x="0" y="16" width="1.2" height="1.2" fill="#555"/><rect x="0" y="18" width="1.2" height="1.2" fill="#555"/><rect x="0" y="20" width="1.2" height="1.2" fill="#555"/><rect x="2.5" y="0" width="1.2" height="1.2" fill="#555"/><rect x="2.5" y="2" width="1.2" height="1.2" fill="#555"/><rect x="2.5" y="4" width="1.2" height="1.2" fill="#555"/><rect x="2.5" y="6" width="1.2" height="1.2" fill="#555"/><rect x="2.5" y="8" width="1.2" height="1.2" fill="#555"/><rect x="2.5" y="10" width="1.2" height="1.2" fill="#555"/><rect x="2.5" y="12" width="1.2" height="1.2" fill="#555"/><rect x="2.5" y="14" width="1.2" height="1.2" fill="#555"/><rect x="2.5" y="16" width="1.2" height="1.2" fill="#555"/><rect x="2.5" y="18" width="1.2" height="1.2" fill="#555"/><rect x="2.5" y="20" width="1.2" height="1.2" fill="#555"/></svg>
<svg style="left:1911px;top:1049px;" width="4" height="21" viewBox="0 0 4 21"><rect x="0" y="0" width="1.2" height="1.2" fill="#555"/><rect x="0" y="2" width="1.2" height="1.2" fill="#555"/><rect x="0" y="4" width="1.2" height="1.2" fill="#555"/><rect x="0" y="6" width="1.2" height="1.2" fill="#555"/><rect x="0" y="8" width="1.2" height="1.2" fill="#555"/><rect x="0" y="10" width="1.2" height="1.2" fill="#555"/><rect x="0" y="12" width="1.2" height="1.2" fill="#555"/><rect x="0" y="14" width="1.2" height="1.2" fill="#555"/><rect x="0" y="16" width="1.2" height="1.2" fill="#555"/><rect x="0" y="18" width="1.2" height="1.2" fill="#555"/><rect x="0" y="20" width="1.2" height="1.2" fill="#555"/><rect x="2.5" y="0" width="1.2" height="1.2" fill="#555"/><rect x="2.5" y="2" width="1.2" height="1.2" fill="#555"/><rect x="2.5" y="4" width="1.2" height="1.2" fill="#555"/><rect x="2.5" y="6" width="1.2" height="1.2" fill="#555"/><rect x="2.5" y="8" width="1.2" height="1.2" fill="#555"/><rect x="2.5" y="10" width="1.2" height="1.2" fill="#555"/><rect x="2.5" y="12" width="1.2" height="1.2" fill="#555"/><rect x="2.5" y="14" width="1.2" height="1.2" fill="#555"/><rect x="2.5" y="16" width="1.2" height="1.2" fill="#555"/><rect x="2.5" y="18" width="1.2" height="1.2" fill="#555"/><rect x="2.5" y="20" width="1.2" height="1.2" fill="#555"/></svg>
</div>
<div class="a" style="left:935px;top:287px;width:239px;height:394px;background:#fafafa;border:1px solid #8c8c8c;box-shadow:1px 1px 2px rgba(0,0,0,.1)"></div>
<div class="a" style="left:936px;top:372px;width:237px;height:28px;background:linear-gradient(#6aaef7,#3e88e8);border:1px solid #2d6fd2"></div>
<div class="t" style="left:942.2px;top:294.6px;font-size:14.5px;color:#2d2d2d;font-family:'Liberation Sans',sans-serif;font-weight:bold;font-style:normal;letter-spacing:-0.519px;">Resources</div>
<div class="t" style="left:970.4px;top:322.8px;font-size:14.5px;color:#3a3a3a;font-family:'Liberation Sans',sans-serif;font-weight:normal;font-style:normal;letter-spacing:0.080px;transform:scaleX(1.0086);transform-origin:0 0;">Download</div>
<div class="t" style="left:942.2px;top:350.6px;font-size:14.5px;color:#2d2d2d;font-family:'Liberation Sans',sans-serif;font-weight:bold;font-style:normal;letter-spacing:-0.143px;">Collection</div>
<div class="t" style="left:970.4px;top:378.8px;font-size:14.5px;color:#fff;font-family:'Liberation Sans',sans-serif;font-weight:normal;font-style:normal;letter-spacing:0.049px;transform:scaleX(1.0075);transform-origin:0 0;">Add selected to collection</div>
<div class="t" style="left:942.2px;top:406.6px;font-size:14.5px;color:#2d2d2d;font-family:'Liberation Sans',sans-serif;font-weight:bold;font-style:normal;letter-spacing:-0.375px;">Share</div>
<div class="t" style="left:970.4px;top:434.6px;font-size:14.5px;color:#3a3a3a;font-family:'Liberation Sans',sans-serif;font-weight:normal;font-style:normal;letter-spacing:-0.172px;">Share selected</div>
<div class="t" style="left:942.2px;top:462.8px;font-size:14.5px;color:#2d2d2d;font-family:'Liberation Sans',sans-serif;font-weight:bold;font-style:normal;letter-spacing:-0.272px;">Advanced</div>
<div class="t" style="left:970.4px;top:490.6px;font-size:14.5px;color:#3a3a3a;font-family:'Liberation Sans',sans-serif;font-weight:normal;font-style:normal;letter-spacing:-0.077px;">Relate selected resources</div>
<div class="t" style="left:970.4px;top:518.8px;font-size:14.5px;color:#3a3a3a;font-family:'Liberation Sans',sans-serif;font-weight:normal;font-style:normal;letter-spacing:-0.165px;">CSV Export - metadata</div>
<div class="t" style="left:970.4px;top:546.5px;font-size:14.5px;color:#3a3a3a;font-family:'Liberation Sans',sans-serif;font-weight:normal;font-style:normal;letter-spacing:-0.099px;">Disk space used by selected</div>
<div class="t" style="left:970.4px;top:574.5px;font-size:14.5px;color:#3a3a3a;font-family:'Liberation Sans',sans-serif;font-weight:normal;font-style:normal;letter-spacing:-0.051px;">Link license</div>
<div class="t" style="left:970.4px;top:602.5px;font-size:14.5px;color:#3a3a3a;font-family:'Liberation Sans',sans-serif;font-weight:normal;font-style:normal;letter-spacing:0.021px;transform:scaleX(1.0030);transform-origin:0 0;">Unlink license</div>
<div class="t" style="left:970.4px;top:630.5px;font-size:14.5px;color:#3a3a3a;font-family:'Liberation Sans',sans-serif;font-weight:normal;font-style:normal;letter-spacing:0.040px;transform:scaleX(1.0054);transform-origin:0 0;">Link consent</div>
<div class="t" style="left:970.4px;top:658.5px;font-size:14.5px;color:#3a3a3a;font-family:'Liberation Sans',sans-serif;font-weight:normal;font-style:normal;letter-spacing:0.089px;transform:scaleX(1.0120);transform-origin:0 0;">Unlink consent</div>
<div style="position:absolute;left:0;top:0;width:1920px;height:1080px;will-change:transform">
<div class="a" style="left:265px;top:334px;width:30px;height:139px;background:#8e8e8e;border-radius:0 8px 8px 0"></div>
<div class="t" style="left:279px;top:405.5px;font-size:18px;color:#f2f2f2;letter-spacing:0.95px;transform:translate(-50%,-50%) rotate(-90deg);transform-origin:center;">Browse</div>
</div>
</body></html>
